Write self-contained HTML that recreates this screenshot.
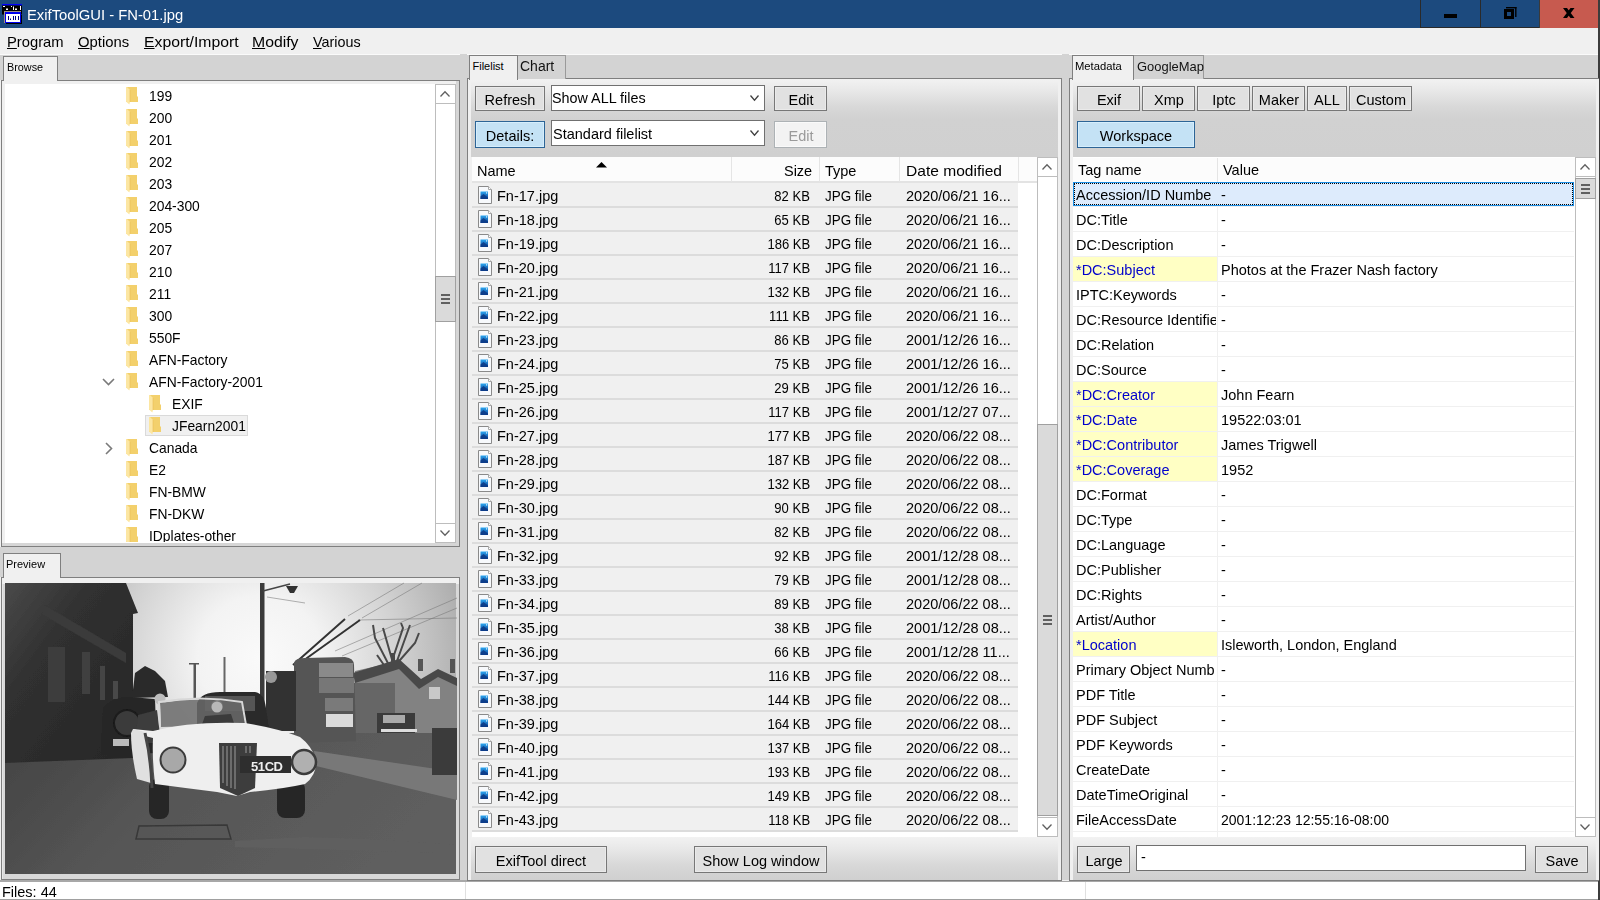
<!DOCTYPE html><html><head><meta charset="utf-8"><style>
*{box-sizing:border-box}
body{margin:0;width:1600px;height:900px;overflow:hidden;position:relative;background:#F0F0F0;font-family:"Liberation Sans",sans-serif;}
.t{position:absolute;white-space:nowrap}
.b{position:absolute}
svg{position:absolute;overflow:visible}
</style></head><body>
<div class="b" style="left:0px;top:0px;width:1598px;height:28px;background:#1C4A7E"></div>
<div class="b" style="left:1598px;top:0px;width:2px;height:900px;background:#3C3C3C"></div>
<svg style="left:0;top:0" width="28" height="28">
<rect x="2" y="4" width="20" height="1.5" fill="#0000FF"/>
<rect x="2" y="5.5" width="20" height="9" fill="#000"/>
<rect x="3" y="6" width="2" height="1" fill="#fff"/><rect x="6" y="8.5" width="2" height="1.5" fill="#fff"/>
<rect x="11" y="6" width="1" height="1" fill="#fff"/><rect x="13" y="6.5" width="1" height="3.5" fill="#fff"/>
<rect x="15" y="8.5" width="2" height="1.5" fill="#fff"/><rect x="20" y="6" width="1" height="4" fill="#fff"/>
<rect x="4" y="11" width="17" height="1" fill="#a09080"/>
<rect x="4" y="11" width="1" height="12" fill="#a09080"/>
<rect x="6" y="23" width="16" height="1" fill="#000"/><rect x="21" y="15" width="1" height="9" fill="#000"/>
<rect x="5" y="12" width="16" height="11" fill="#0000F0"/>
<rect x="6" y="14" width="14" height="8" fill="#fff"/>
<rect x="8" y="16" width="1" height="4" fill="#000080"/><rect x="10" y="18.5" width="1" height="1.5" fill="#000080"/>
<rect x="13" y="16" width="1" height="4" fill="#000080"/><rect x="15" y="16" width="1" height="4" fill="#000080"/><rect x="18" y="16" width="1" height="4" fill="#000080"/>
</svg>
<div class="t" style="left:27px;top:7.30px;font-size:15px;line-height:15px;color:#fff;transform:scaleX(0.986034);transform-origin:0 0;">ExifToolGUI - FN-01.jpg</div>
<div class="b" style="left:1420px;top:0px;width:119px;height:28px;border-left:1px solid #2A2A2A;border-bottom:1px solid #2A2A2A"></div>
<div class="b" style="left:1480px;top:0px;width:1px;height:27px;background:#2A2A2A"></div>
<div class="b" style="left:1540px;top:0px;width:58px;height:28px;background:#C75A4F"></div>
<div class="b" style="left:1539px;top:0px;width:1px;height:28px;background:#3A3A3A"></div>
<div class="b" style="left:1444px;top:14px;width:13px;height:4px;background:#000"></div>
<svg style="left:1500px;top:5px" width="20" height="18">
<rect x="6" y="2" width="10.5" height="1.4" fill="#000"/><rect x="15.1" y="2" width="1.4" height="10" fill="#000"/>
<rect x="4" y="4" width="10" height="10" fill="#000"/><rect x="7" y="7" width="4" height="4" fill="#1C4A7E"/>
</svg>
<svg style="left:1560px;top:6px" width="18" height="15">
<path d="M3 2 H7 L14.5 12 H10.5 Z M10.5 2 H14.5 L7 12 H3 Z" fill="#000"/>
</svg>
<div class="b" style="left:0px;top:28px;width:1598px;height:26px;background:#F0F0F0"></div>
<div class="t" style="left:7px;top:34.30px;font-size:15px;line-height:15px;color:#000;transform:scaleX(0.9841006);transform-origin:0 0;"><u>P</u>rogram</div>
<div class="t" style="left:78.4px;top:34.30px;font-size:15px;line-height:15px;color:#000;transform:scaleX(0.9889340999999999);transform-origin:0 0;"><u>O</u>ptions</div>
<div class="t" style="left:143.7px;top:34.30px;font-size:15px;line-height:15px;color:#000;transform:scaleX(1.0498362);transform-origin:0 0;"><u>E</u>xport/Import</div>
<div class="t" style="left:252.3px;top:34.30px;font-size:15px;line-height:15px;color:#000;transform:scaleX(1.0527363);transform-origin:0 0;"><u>M</u>odify</div>
<div class="t" style="left:313px;top:34.30px;font-size:15px;line-height:15px;color:#000;transform:scaleX(0.957033);transform-origin:0 0;"><u>V</u>arious</div>
<div class="b" style="left:0px;top:54px;width:460px;height:26px;background:#D3D3D3"></div>
<div class="b" style="left:0px;top:54px;width:460px;height:1px;background:#FAFAFA"></div>
<div class="b" style="left:1px;top:80px;width:459px;height:467px;background:#F0F0F0;border:1px solid #7F7F7F"></div>
<div class="b" style="left:456px;top:81px;width:3px;height:465px;background:#D6D6D6"></div>
<div class="b" style="left:2px;top:543px;width:457px;height:3px;background:#D6D6D6"></div>
<div class="b" style="left:5px;top:84px;width:451px;height:459px;background:#fff"></div>
<div class="b" style="left:3px;top:56px;width:55px;height:25px;background:#F0F0F0;border:1px solid #7F7F7F;border-bottom:none"></div>
<div class="t" style="left:6.5px;top:61.99px;font-size:11px;line-height:11px;color:#000;transform:scaleX(0.985);transform-origin:0 0;">Browse</div>
<div class="b" style="left:435px;top:84px;width:21px;height:459px;background:#fff;border-left:1px solid #BDBDBD;border-right:1px solid #BDBDBD"></div>
<div class="b" style="left:435px;top:84px;width:21px;height:20px;background:#fff;border:1px solid #BDBDBD"></div>
<svg style="left:440px;top:91px" width="10" height="6"><path d="M0.5 5.5 L5.0 0.8 L9.5 5.5" fill="none" stroke="#606060" stroke-width="1.3"/></svg>
<div class="b" style="left:435px;top:523px;width:21px;height:20px;background:#fff;border:1px solid #BDBDBD"></div>
<svg style="left:440px;top:530px" width="10" height="6"><path d="M0.5 0.5 L5.0 5.2 L9.5 0.5" fill="none" stroke="#606060" stroke-width="1.3"/></svg>
<div class="b" style="left:435px;top:276px;width:21px;height:46px;background:#DADADA;border:1px solid #A0A0A0"></div>
<div class="b" style="left:441px;top:294.0px;width:9px;height:2.0px;background:#606060"></div>
<div class="b" style="left:441px;top:298.0px;width:9px;height:2.0px;background:#606060"></div>
<div class="b" style="left:441px;top:302.0px;width:9px;height:2.0px;background:#606060"></div>
<div class="b" style="left:5px;top:85px;width:430px;height:457px;overflow:hidden">
<svg style="left:121px;top:2px" width="13" height="18"><path d="M0 0 H11 V9.5 H12 V15 H0 Z" fill="#F3D06C"/><path d="M0 0 H1 L4 3 V15 L3.3 17.5 L0 14.5 Z" fill="#FCE6A2"/><path d="M4 3 V15" stroke="#E9BE55" stroke-width="0.6"/></svg>
<div class="t" style="left:143.5px;top:2.90px;font-size:15px;line-height:15px;color:#000;transform:scaleX(0.9231984999999999);transform-origin:0 0;">199</div>
<svg style="left:121px;top:24px" width="13" height="18"><path d="M0 0 H11 V9.5 H12 V15 H0 Z" fill="#F3D06C"/><path d="M0 0 H1 L4 3 V15 L3.3 17.5 L0 14.5 Z" fill="#FCE6A2"/><path d="M4 3 V15" stroke="#E9BE55" stroke-width="0.6"/></svg>
<div class="t" style="left:143.5px;top:24.90px;font-size:15px;line-height:15px;color:#000;transform:scaleX(0.9231984999999999);transform-origin:0 0;">200</div>
<svg style="left:121px;top:46px" width="13" height="18"><path d="M0 0 H11 V9.5 H12 V15 H0 Z" fill="#F3D06C"/><path d="M0 0 H1 L4 3 V15 L3.3 17.5 L0 14.5 Z" fill="#FCE6A2"/><path d="M4 3 V15" stroke="#E9BE55" stroke-width="0.6"/></svg>
<div class="t" style="left:143.5px;top:46.90px;font-size:15px;line-height:15px;color:#000;transform:scaleX(0.9231984999999999);transform-origin:0 0;">201</div>
<svg style="left:121px;top:68px" width="13" height="18"><path d="M0 0 H11 V9.5 H12 V15 H0 Z" fill="#F3D06C"/><path d="M0 0 H1 L4 3 V15 L3.3 17.5 L0 14.5 Z" fill="#FCE6A2"/><path d="M4 3 V15" stroke="#E9BE55" stroke-width="0.6"/></svg>
<div class="t" style="left:143.5px;top:68.90px;font-size:15px;line-height:15px;color:#000;transform:scaleX(0.9231984999999999);transform-origin:0 0;">202</div>
<svg style="left:121px;top:90px" width="13" height="18"><path d="M0 0 H11 V9.5 H12 V15 H0 Z" fill="#F3D06C"/><path d="M0 0 H1 L4 3 V15 L3.3 17.5 L0 14.5 Z" fill="#FCE6A2"/><path d="M4 3 V15" stroke="#E9BE55" stroke-width="0.6"/></svg>
<div class="t" style="left:143.5px;top:90.90px;font-size:15px;line-height:15px;color:#000;transform:scaleX(0.9231984999999999);transform-origin:0 0;">203</div>
<svg style="left:121px;top:112px" width="13" height="18"><path d="M0 0 H11 V9.5 H12 V15 H0 Z" fill="#F3D06C"/><path d="M0 0 H1 L4 3 V15 L3.3 17.5 L0 14.5 Z" fill="#FCE6A2"/><path d="M4 3 V15" stroke="#E9BE55" stroke-width="0.6"/></svg>
<div class="t" style="left:143.5px;top:112.90px;font-size:15px;line-height:15px;color:#000;transform:scaleX(0.9231984999999999);transform-origin:0 0;">204-300</div>
<svg style="left:121px;top:134px" width="13" height="18"><path d="M0 0 H11 V9.5 H12 V15 H0 Z" fill="#F3D06C"/><path d="M0 0 H1 L4 3 V15 L3.3 17.5 L0 14.5 Z" fill="#FCE6A2"/><path d="M4 3 V15" stroke="#E9BE55" stroke-width="0.6"/></svg>
<div class="t" style="left:143.5px;top:134.90px;font-size:15px;line-height:15px;color:#000;transform:scaleX(0.9231984999999999);transform-origin:0 0;">205</div>
<svg style="left:121px;top:156px" width="13" height="18"><path d="M0 0 H11 V9.5 H12 V15 H0 Z" fill="#F3D06C"/><path d="M0 0 H1 L4 3 V15 L3.3 17.5 L0 14.5 Z" fill="#FCE6A2"/><path d="M4 3 V15" stroke="#E9BE55" stroke-width="0.6"/></svg>
<div class="t" style="left:143.5px;top:156.90px;font-size:15px;line-height:15px;color:#000;transform:scaleX(0.9231984999999999);transform-origin:0 0;">207</div>
<svg style="left:121px;top:178px" width="13" height="18"><path d="M0 0 H11 V9.5 H12 V15 H0 Z" fill="#F3D06C"/><path d="M0 0 H1 L4 3 V15 L3.3 17.5 L0 14.5 Z" fill="#FCE6A2"/><path d="M4 3 V15" stroke="#E9BE55" stroke-width="0.6"/></svg>
<div class="t" style="left:143.5px;top:178.90px;font-size:15px;line-height:15px;color:#000;transform:scaleX(0.9231984999999999);transform-origin:0 0;">210</div>
<svg style="left:121px;top:200px" width="13" height="18"><path d="M0 0 H11 V9.5 H12 V15 H0 Z" fill="#F3D06C"/><path d="M0 0 H1 L4 3 V15 L3.3 17.5 L0 14.5 Z" fill="#FCE6A2"/><path d="M4 3 V15" stroke="#E9BE55" stroke-width="0.6"/></svg>
<div class="t" style="left:143.5px;top:200.90px;font-size:15px;line-height:15px;color:#000;transform:scaleX(0.9231984999999999);transform-origin:0 0;">211</div>
<svg style="left:121px;top:222px" width="13" height="18"><path d="M0 0 H11 V9.5 H12 V15 H0 Z" fill="#F3D06C"/><path d="M0 0 H1 L4 3 V15 L3.3 17.5 L0 14.5 Z" fill="#FCE6A2"/><path d="M4 3 V15" stroke="#E9BE55" stroke-width="0.6"/></svg>
<div class="t" style="left:143.5px;top:222.90px;font-size:15px;line-height:15px;color:#000;transform:scaleX(0.9231984999999999);transform-origin:0 0;">300</div>
<svg style="left:121px;top:244px" width="13" height="18"><path d="M0 0 H11 V9.5 H12 V15 H0 Z" fill="#F3D06C"/><path d="M0 0 H1 L4 3 V15 L3.3 17.5 L0 14.5 Z" fill="#FCE6A2"/><path d="M4 3 V15" stroke="#E9BE55" stroke-width="0.6"/></svg>
<div class="t" style="left:143.5px;top:244.90px;font-size:15px;line-height:15px;color:#000;transform:scaleX(0.9231984999999999);transform-origin:0 0;">550F</div>
<svg style="left:121px;top:266px" width="13" height="18"><path d="M0 0 H11 V9.5 H12 V15 H0 Z" fill="#F3D06C"/><path d="M0 0 H1 L4 3 V15 L3.3 17.5 L0 14.5 Z" fill="#FCE6A2"/><path d="M4 3 V15" stroke="#E9BE55" stroke-width="0.6"/></svg>
<div class="t" style="left:143.5px;top:266.90px;font-size:15px;line-height:15px;color:#000;transform:scaleX(0.9231984999999999);transform-origin:0 0;">AFN-Factory</div>
<svg style="left:121px;top:288px" width="13" height="18"><path d="M0 0 H11 V9.5 H12 V15 H0 Z" fill="#F3D06C"/><path d="M0 0 H1 L4 3 V15 L3.3 17.5 L0 14.5 Z" fill="#FCE6A2"/><path d="M4 3 V15" stroke="#E9BE55" stroke-width="0.6"/></svg>
<div class="t" style="left:143.5px;top:288.90px;font-size:15px;line-height:15px;color:#000;transform:scaleX(0.9231984999999999);transform-origin:0 0;">AFN-Factory-2001</div>
<svg style="left:144px;top:310px" width="13" height="18"><path d="M0 0 H11 V9.5 H12 V15 H0 Z" fill="#F3D06C"/><path d="M0 0 H1 L4 3 V15 L3.3 17.5 L0 14.5 Z" fill="#FCE6A2"/><path d="M4 3 V15" stroke="#E9BE55" stroke-width="0.6"/></svg>
<div class="t" style="left:166.5px;top:310.90px;font-size:15px;line-height:15px;color:#000;transform:scaleX(0.9231984999999999);transform-origin:0 0;">EXIF</div>
<div class="b" style="left:139.5px;top:329.5px;width:103.0px;height:21.5px;background:#F0F0F0;border:1px solid #DADADA"></div>
<svg style="left:144px;top:332px" width="13" height="18"><path d="M0 0 H11 V9.5 H12 V15 H0 Z" fill="#F3D06C"/><path d="M0 0 H1 L4 3 V15 L3.3 17.5 L0 14.5 Z" fill="#FCE6A2"/><path d="M4 3 V15" stroke="#E9BE55" stroke-width="0.6"/></svg>
<div class="t" style="left:166.5px;top:332.90px;font-size:15px;line-height:15px;color:#000;transform:scaleX(0.9231984999999999);transform-origin:0 0;">JFearn2001</div>
<svg style="left:121px;top:354px" width="13" height="18"><path d="M0 0 H11 V9.5 H12 V15 H0 Z" fill="#F3D06C"/><path d="M0 0 H1 L4 3 V15 L3.3 17.5 L0 14.5 Z" fill="#FCE6A2"/><path d="M4 3 V15" stroke="#E9BE55" stroke-width="0.6"/></svg>
<div class="t" style="left:143.5px;top:354.90px;font-size:15px;line-height:15px;color:#000;transform:scaleX(0.9231984999999999);transform-origin:0 0;">Canada</div>
<svg style="left:121px;top:376px" width="13" height="18"><path d="M0 0 H11 V9.5 H12 V15 H0 Z" fill="#F3D06C"/><path d="M0 0 H1 L4 3 V15 L3.3 17.5 L0 14.5 Z" fill="#FCE6A2"/><path d="M4 3 V15" stroke="#E9BE55" stroke-width="0.6"/></svg>
<div class="t" style="left:143.5px;top:376.90px;font-size:15px;line-height:15px;color:#000;transform:scaleX(0.9231984999999999);transform-origin:0 0;">E2</div>
<svg style="left:121px;top:398px" width="13" height="18"><path d="M0 0 H11 V9.5 H12 V15 H0 Z" fill="#F3D06C"/><path d="M0 0 H1 L4 3 V15 L3.3 17.5 L0 14.5 Z" fill="#FCE6A2"/><path d="M4 3 V15" stroke="#E9BE55" stroke-width="0.6"/></svg>
<div class="t" style="left:143.5px;top:398.90px;font-size:15px;line-height:15px;color:#000;transform:scaleX(0.9231984999999999);transform-origin:0 0;">FN-BMW</div>
<svg style="left:121px;top:420px" width="13" height="18"><path d="M0 0 H11 V9.5 H12 V15 H0 Z" fill="#F3D06C"/><path d="M0 0 H1 L4 3 V15 L3.3 17.5 L0 14.5 Z" fill="#FCE6A2"/><path d="M4 3 V15" stroke="#E9BE55" stroke-width="0.6"/></svg>
<div class="t" style="left:143.5px;top:420.90px;font-size:15px;line-height:15px;color:#000;transform:scaleX(0.9231984999999999);transform-origin:0 0;">FN-DKW</div>
<svg style="left:121px;top:442px" width="13" height="18"><path d="M0 0 H11 V9.5 H12 V15 H0 Z" fill="#F3D06C"/><path d="M0 0 H1 L4 3 V15 L3.3 17.5 L0 14.5 Z" fill="#FCE6A2"/><path d="M4 3 V15" stroke="#E9BE55" stroke-width="0.6"/></svg>
<div class="t" style="left:143.5px;top:442.90px;font-size:15px;line-height:15px;color:#000;transform:scaleX(0.9231984999999999);transform-origin:0 0;">IDplates-other</div>
</div>
<svg style="left:102px;top:378px" width="13" height="8"><path d="M1 1 L6.5 6.5 L12 1" fill="none" stroke="#7A7A7A" stroke-width="1.6"/></svg>
<svg style="left:105px;top:442px" width="8" height="13"><path d="M1 1 L6.5 6.5 L1 12" fill="none" stroke="#7A7A7A" stroke-width="1.6"/></svg>
<div class="b" style="left:0px;top:547px;width:460px;height:30px;background:#D3D3D3"></div>
<div class="b" style="left:1px;top:577px;width:459px;height:303px;background:#F0F0F0;border:1px solid #7F7F7F"></div>
<div class="b" style="left:2px;top:583px;width:457px;height:296px;background:#D8D8D8;border-top:1px solid #F0F0F0;box-shadow:inset 1px 0 0 #E6E6E6"></div>
<div class="b" style="left:3px;top:553px;width:58px;height:25px;background:#F0F0F0;border:1px solid #7F7F7F;border-bottom:none"></div>
<div class="t" style="left:6.4px;top:558.69px;font-size:11px;line-height:11px;color:#000;transform:scaleX(0.999);transform-origin:0 0;">Preview</div>
<svg style="left:5px;top:583px" width="451" height="291" viewBox="0 0 451 291">
<defs>
<radialGradient id="sky" gradientUnits="userSpaceOnUse" cx="255" cy="75" r="250"><stop offset="0" stop-color="#FAFAFA"/><stop offset="0.25" stop-color="#F3F3F3"/><stop offset="0.55" stop-color="#D2D2D2"/><stop offset="0.85" stop-color="#ABABAB"/><stop offset="1" stop-color="#9A9A9A"/></radialGradient>
<linearGradient id="road" x1="0" y1="0" x2="1" y2="0.3"><stop offset="0" stop-color="#434343"/><stop offset="0.45" stop-color="#565656"/><stop offset="1" stop-color="#5E5E5E"/></linearGradient>
<linearGradient id="bldg" x1="0" y1="0" x2="1" y2="1"><stop offset="0" stop-color="#4A4A4A"/><stop offset="0.35" stop-color="#303030"/><stop offset="1" stop-color="#262626"/></linearGradient>
<filter id="bl" x="-5%" y="-5%" width="110%" height="110%"><feGaussianBlur stdDeviation="0.7"/></filter>
</defs>
<g filter="url(#bl)">
<rect x="0" y="0" width="451" height="291" fill="url(#sky)"/>
<!-- wires -->
<g stroke="#777" stroke-width="0.8" fill="none" opacity="0.7">
<path d="M343 33 L399 0 M357 35 L417 0 M353 37 L452 35 M337 73 L452 25 M330 68 L452 15 M262 14 L300 20"/>
</g>
<!-- trolley poles -->
<path d="M288 82 L340 36 M295 80 L355 37" stroke="#333" stroke-width="2" fill="none"/>
<!-- road -->
<path d="M0 150 L130 150 L300 150 L451 150 L451 291 L0 291 Z" fill="url(#road)"/>
<path d="M309 168 L452 189 L452 217 L311 183 Z" fill="#787878"/>

<path d="M230 258 L300 254 L360 256 L451 262 L451 270 L300 266 L230 264 Z" fill="#5F5F5F"/>
<!-- tree -->
<g stroke="#4a4a4a" fill="none">
<path d="M388 128 L388 70" stroke-width="4"/>
<path d="M388 90 L370 55 L368 42 M388 80 L378 45 M388 75 L398 45 L396 40 M388 85 L410 60 L414 50 M388 95 L372 72 M392 78 L405 42" stroke-width="2"/>
</g>
<!-- houses -->
<path d="M350 88 L394 78 L414 98 L433 88 L452 100 L452 150 L350 150 Z" fill="#828282"/>
<path d="M348 90 L394 76 L416 96 L433 86 L452 95 L452 103 L433 94 L414 106 L394 86 L350 100 Z" fill="#4A4A4A"/>
<rect x="413" y="76" width="5" height="12" fill="#555"/><rect x="445" y="76" width="5" height="14" fill="#555"/>
<rect x="345" y="100" width="45" height="50" fill="#666"/>
<rect x="424" y="104" width="11" height="12" fill="#C8C8C8"/>
<rect x="427" y="145" width="25" height="47" fill="#3A3A3A"/>
<!-- van right -->
<rect x="372" y="130" width="38" height="20" fill="#3a3a3a"/>
<rect x="378" y="132" width="22" height="8" fill="#AAA"/>
<rect x="376" y="146" width="36" height="3" fill="#DDD"/>
<!-- lamp post -->
<rect x="255" y="0" width="4.5" height="136" fill="#3A3A3A"/>
<path d="M258 8 L285 1" stroke="#444" stroke-width="1.5"/>
<path d="M281 3 L293 3 L289 10 L285 10 Z" fill="#333"/>
<!-- utility poles -->
<rect x="188.5" y="80" width="2.5" height="36" fill="#555"/><rect x="184" y="80" width="10" height="1.5" fill="#555"/>
<rect x="218.5" y="74" width="2" height="38" fill="#666"/>
<!-- bus -->
<path d="M289 80 Q290 75 300 75 L340 74 Q349 75 349 82 L351 158 L289 160 Z" fill="#555"/>
<rect x="314" y="80" width="34" height="14" fill="#8A8A8A"/>
<rect x="314" y="95" width="35" height="15" fill="#777"/>
<rect x="320" y="115" width="28" height="13" fill="#7A7A7A"/>
<rect x="321" y="131" width="27" height="13" fill="#DADADA"/>
<rect x="261" y="88" width="30" height="60" fill="#333"/>
<circle cx="266" cy="94" r="6" fill="#999"/>
<!-- building -->
<path d="M0 0 L121 0 L133 30 L128 31 L128 175 L0 180 Z" fill="url(#bldg)"/>
<path d="M38 21 L121 70 L121 80 L38 32 Z" fill="#3A3A3A"/>
<rect x="43" y="64" width="17" height="55" fill="#3E3E3E"/>
<rect x="77" y="69" width="8" height="42" fill="#404040"/>
<rect x="95" y="83" width="5" height="34" fill="#444"/>
<rect x="108" y="98" width="5" height="18" fill="#484848"/>
<!-- bushy tree -->
<path d="M127 115 L130 90 L140 83 L150 88 L160 98 L163 114 Z" fill="#2C2C2C"/>
<!-- dark car left -->
<path d="M98 125 Q105 115 125 114 L150 116 L152 170 L96 172 Z" fill="#262626"/>
<circle cx="122" cy="140" r="13" fill="#3A3A3A" stroke="#1a1a1a" stroke-width="2"/>
<rect x="108" y="156" width="16" height="7" fill="#BBB"/>
<!-- dark car behind -->
<path d="M192 120 Q196 109 215 109 L250 109 Q259 110 261 125 L265 152 L192 152 Z" fill="#2A2A2A"/>
<rect x="200" y="113" width="50" height="15" fill="#555"/>
<!-- people -->
<path d="M133 132 L152 127 L156 160 L130 160 Z" fill="#3C3C3C"/>
<circle cx="155" cy="116" r="5.5" fill="#BDBDBD"/>
<circle cx="212" cy="123" r="6" fill="#ABABAB"/>
<path d="M198 135 L228 133 L230 145 L196 146 Z" fill="#333"/>
<!-- windscreen -->
<path d="M156 144 L155 120 Q195 113 236 120 L240 142 Z" fill="#6A6A6A" opacity="0.85"/>
<circle cx="212" cy="124" r="5.5" fill="#B8B8B8"/><path d="M200 133 L226 131 L230 143 L196 144 Z" fill="#3A3A3A"/>
<path d="M155 144 L154 119 Q195 112 237 119 L241 142" fill="none" stroke="#D8D8D8" stroke-width="2"/>
<!-- wheels -->
<rect x="144" y="196" width="20" height="40" rx="8" fill="#262626"/>
<rect x="272" y="198" width="28" height="37" rx="8" fill="#262626"/>
<!-- white car -->
<path d="M128 146 L148 148 Q185 138 240 140 Q275 146 295 154 Q307 163 311 177 Q312 192 300 201 Q278 206 245 209 L232 213 L212 209 Q180 205 150 201 Q147 175 148 155 L128 150 Z" fill="#EFEFEF"/>
<path d="M128 146 L140 149 Q145 175 146 200 L132 196 Q126 170 126 150 Z" fill="#E0E0E0"/>
<path d="M140 150 Q146 175 147 205" stroke="#444" stroke-width="3" fill="none"/>
<path d="M214 160 L252 160 L250 205 L233 213 L215 205 Z" fill="#3E3E3E"/><path d="M218 163 V200 M222 163 V203 M226 163 V205 M230 163 V206 M241 163 V170 M245 163 V170" stroke="#9A9A9A" stroke-width="1"/>
<rect x="235" y="173" width="51" height="17" fill="#2E2E2E"/>
<text x="246" y="187.5" font-family="Liberation Sans" font-weight="bold" font-size="13" fill="#EEE" textLength="32">51CD</text>
<circle cx="168" cy="177" r="12.5" fill="#A8A8A8" stroke="#3A3A3A" stroke-width="2"/>
<circle cx="299" cy="179" r="12" fill="#B0B0B0" stroke="#3A3A3A" stroke-width="2.5"/>
<!-- drain -->
<path d="M134 243 L222 242 L226 256 L131 256 Z" fill="none" stroke="#383838" stroke-width="1.5"/>
</g>
</svg>
<div class="b" style="left:460px;top:54px;width:7px;height:826px;background:#D3D3D3"></div>
<div class="b" style="left:1062px;top:54px;width:7px;height:826px;background:#D3D3D3"></div>
<div class="b" style="left:467px;top:54px;width:595px;height:25px;background:#D3D3D3"></div>
<div class="b" style="left:467px;top:54px;width:595px;height:1px;background:#FAFAFA"></div>
<div class="b" style="left:467px;top:78px;width:595px;height:803px;background:#F0F0F0;border:1px solid #7F7F7F"></div>
<div class="b" style="left:471px;top:79px;width:587px;height:78px;background:linear-gradient(to bottom,#F2F2F2 0px,#E8E8E8 12px,#D8D8D8 28px,#D1D1D1 40px,#D0D0D0 100%)"></div>
<div class="b" style="left:471px;top:837px;width:587px;height:43px;background:linear-gradient(to bottom,#F2F2F2 0px,#E8E8E8 12px,#D8D8D8 28px,#D1D1D1 40px,#D0D0D0 100%)"></div>
<div class="b" style="left:517px;top:55px;width:49px;height:24px;background:#D3D3D3;border:1px solid #9A9A9A;border-bottom:none"></div>
<div class="b" style="left:469px;top:55px;width:49px;height:24.5px;background:#F0F0F0;border:1px solid #7F7F7F;border-bottom:none"></div>
<div class="t" style="left:472.5px;top:60.99px;font-size:11px;line-height:11px;color:#000;letter-spacing:-0.4pxtransform:scaleX(0.999);transform-origin:0 0;">Filelist</div>
<div class="t" style="left:520.2px;top:58.75px;font-size:14px;line-height:14px;color:#111;transform:scaleX(0.999);transform-origin:0 0;">Chart</div>
<div class="b" style="left:475px;top:86px;width:70px;height:25px;background:#E1E1E1;border:1px solid #777;box-shadow:inset 0 0 0 1px #EAEAEA"></div>
<div class="t" style="left:310.0px;width:400px;text-align:center;top:92.30px;font-size:15px;line-height:15px;color:#000;transform:scaleX(0.9667);transform-origin:50% 0;">Refresh</div>
<div class="b" style="left:551px;top:85px;width:214px;height:26px;background:#fff;border:1px solid #707070"></div>
<div class="t" style="left:552px;top:90.30px;font-size:15px;line-height:15px;color:#000;transform:scaleX(0.957033);transform-origin:0 0;">Show ALL files</div>
<svg style="left:750px;top:95px" width="9" height="6"><path d="M0.5 0.5 L4.5 5.2 L8.5 0.5" fill="none" stroke="#404040" stroke-width="1.3"/></svg>
<div class="b" style="left:774px;top:86px;width:53px;height:25px;background:#E1E1E1;border:1px solid #777;box-shadow:inset 0 0 0 1px #EAEAEA"></div>
<div class="t" style="left:600.5px;width:400px;text-align:center;top:92.30px;font-size:15px;line-height:15px;color:#000;transform:scaleX(0.9667);transform-origin:50% 0;">Edit</div>
<div class="b" style="left:475px;top:121px;width:70px;height:27px;background:#C4E2F5;border:1px solid #2C6496;box-shadow:inset 0 0 0 1px #D6EEFC"></div>
<div class="t" style="left:310.0px;width:400px;text-align:center;top:127.90px;font-size:15px;line-height:15px;color:#000;transform:scaleX(0.9667);transform-origin:50% 0;">Details:</div>
<div class="b" style="left:551px;top:120px;width:214px;height:26px;background:#fff;border:1px solid #707070"></div>
<div class="t" style="left:553px;top:126.30px;font-size:15px;line-height:15px;color:#000;transform:scaleX(0.9667);transform-origin:0 0;">Standard filelist</div>
<svg style="left:750px;top:130px" width="9" height="6"><path d="M0.5 0.5 L4.5 5.2 L8.5 0.5" fill="none" stroke="#404040" stroke-width="1.3"/></svg>
<div class="b" style="left:774px;top:121px;width:53px;height:27px;background:#F3F3F3;border:1px solid #ADB2B5;box-shadow:inset 0 0 0 1px #FAFAFA"></div>
<div class="t" style="left:600.5px;width:400px;text-align:center;top:127.90px;font-size:15px;line-height:15px;color:#9A9A9A;transform:scaleX(0.9667);transform-origin:50% 0;">Edit</div>
<div class="b" style="left:472px;top:157px;width:586px;height:680px;background:#fff"></div>
<div class="b" style="left:472px;top:157px;width:565px;height:26px;background:#FCFCFC;border-bottom:2px solid #E3E3E3"></div>
<div class="b" style="left:730.5px;top:157px;width:1.0px;height:25px;background:#E5E5E5"></div>
<div class="b" style="left:818.5px;top:157px;width:1.0px;height:25px;background:#E5E5E5"></div>
<div class="b" style="left:898.5px;top:157px;width:1.0px;height:25px;background:#E5E5E5"></div>
<div class="b" style="left:1018px;top:157px;width:1px;height:25px;background:#E5E5E5"></div>
<div class="t" style="left:477px;top:163.30px;font-size:15px;line-height:15px;color:#000;transform:scaleX(0.9667);transform-origin:0 0;">Name</div>
<svg style="left:596px;top:162px" width="11" height="6"><path d="M0 5.5 L5.5 0 L11 5.5 Z" fill="#000"/></svg>
<div class="t" style="right:787.5px;top:163.30px;font-size:15px;line-height:15px;color:#000;transform:scaleX(0.9667);transform-origin:100% 0;">Size</div>
<div class="t" style="left:825px;top:163.30px;font-size:15px;line-height:15px;color:#000;transform:scaleX(0.9667);transform-origin:0 0;">Type</div>
<div class="t" style="left:905.6px;top:163.30px;font-size:15px;line-height:15px;color:#000;transform:scaleX(1.0372691);transform-origin:0 0;">Date modified</div>
<svg style="left:0;top:0" width="0" height="0"><defs><linearGradient id="ig" x1="0" y1="0" x2="0" y2="1"><stop offset="0" stop-color="#2BA8F2"/><stop offset="1" stop-color="#0D3F94"/></linearGradient></defs></svg>
<div class="b" style="left:472px;top:183px;width:546px;height:23px;background:#F0F0F0"></div>
<div class="b" style="left:472px;top:206px;width:546px;height:2px;background:#DCDCDC"></div>
<svg style="left:478px;top:186px" width="15" height="19"><path d="M0.5 0.5 H10.5 L13.5 3.5 V17.5 H0.5 Z" fill="#F7F9FC" stroke="#8A8A8A"/><path d="M10.5 0.5 V3.5 H13.5" fill="#fff" stroke="#A8A8A8"/><rect x="2.5" y="5.5" width="7.5" height="7.5" fill="url(#ig)"/><path d="M2.5 13 L2.5 10.5 L5.5 8 L10 11.5 V13 Z" fill="#0B3A86" opacity="0.85"/><rect x="8" y="6.3" width="1.2" height="1.2" fill="#E8F4FF"/></svg>
<div class="t" style="left:497px;top:188.30px;font-size:15px;line-height:15px;color:#000;transform:scaleX(0.9667);transform-origin:0 0;">Fn-17.jpg</div>
<div class="t" style="right:790px;top:188.30px;font-size:15px;line-height:15px;color:#000;transform:scaleX(0.87003);transform-origin:100% 0;">82 KB</div>
<div class="t" style="left:825px;top:188.30px;font-size:15px;line-height:15px;color:#000;transform:scaleX(0.8951642000000001);transform-origin:0 0;">JPG file</div>
<div class="t" style="left:905.6px;top:188.30px;font-size:15px;line-height:15px;color:#000;transform:scaleX(0.9667);transform-origin:0 0;">2020/06/21 16...</div>
<div class="b" style="left:472px;top:208px;width:546px;height:22px;background:#F0F0F0"></div>
<div class="b" style="left:472px;top:230px;width:546px;height:2px;background:#DCDCDC"></div>
<svg style="left:478px;top:210px" width="15" height="19"><path d="M0.5 0.5 H10.5 L13.5 3.5 V17.5 H0.5 Z" fill="#F7F9FC" stroke="#8A8A8A"/><path d="M10.5 0.5 V3.5 H13.5" fill="#fff" stroke="#A8A8A8"/><rect x="2.5" y="5.5" width="7.5" height="7.5" fill="url(#ig)"/><path d="M2.5 13 L2.5 10.5 L5.5 8 L10 11.5 V13 Z" fill="#0B3A86" opacity="0.85"/><rect x="8" y="6.3" width="1.2" height="1.2" fill="#E8F4FF"/></svg>
<div class="t" style="left:497px;top:212.30px;font-size:15px;line-height:15px;color:#000;transform:scaleX(0.9667);transform-origin:0 0;">Fn-18.jpg</div>
<div class="t" style="right:790px;top:212.30px;font-size:15px;line-height:15px;color:#000;transform:scaleX(0.87003);transform-origin:100% 0;">65 KB</div>
<div class="t" style="left:825px;top:212.30px;font-size:15px;line-height:15px;color:#000;transform:scaleX(0.8951642000000001);transform-origin:0 0;">JPG file</div>
<div class="t" style="left:905.6px;top:212.30px;font-size:15px;line-height:15px;color:#000;transform:scaleX(0.9667);transform-origin:0 0;">2020/06/21 16...</div>
<div class="b" style="left:472px;top:232px;width:546px;height:22px;background:#F0F0F0"></div>
<div class="b" style="left:472px;top:254px;width:546px;height:2px;background:#DCDCDC"></div>
<svg style="left:478px;top:234px" width="15" height="19"><path d="M0.5 0.5 H10.5 L13.5 3.5 V17.5 H0.5 Z" fill="#F7F9FC" stroke="#8A8A8A"/><path d="M10.5 0.5 V3.5 H13.5" fill="#fff" stroke="#A8A8A8"/><rect x="2.5" y="5.5" width="7.5" height="7.5" fill="url(#ig)"/><path d="M2.5 13 L2.5 10.5 L5.5 8 L10 11.5 V13 Z" fill="#0B3A86" opacity="0.85"/><rect x="8" y="6.3" width="1.2" height="1.2" fill="#E8F4FF"/></svg>
<div class="t" style="left:497px;top:236.30px;font-size:15px;line-height:15px;color:#000;transform:scaleX(0.9667);transform-origin:0 0;">Fn-19.jpg</div>
<div class="t" style="right:790px;top:236.30px;font-size:15px;line-height:15px;color:#000;transform:scaleX(0.87003);transform-origin:100% 0;">186 KB</div>
<div class="t" style="left:825px;top:236.30px;font-size:15px;line-height:15px;color:#000;transform:scaleX(0.8951642000000001);transform-origin:0 0;">JPG file</div>
<div class="t" style="left:905.6px;top:236.30px;font-size:15px;line-height:15px;color:#000;transform:scaleX(0.9667);transform-origin:0 0;">2020/06/21 16...</div>
<div class="b" style="left:472px;top:256px;width:546px;height:22px;background:#F0F0F0"></div>
<div class="b" style="left:472px;top:278px;width:546px;height:2px;background:#DCDCDC"></div>
<svg style="left:478px;top:258px" width="15" height="19"><path d="M0.5 0.5 H10.5 L13.5 3.5 V17.5 H0.5 Z" fill="#F7F9FC" stroke="#8A8A8A"/><path d="M10.5 0.5 V3.5 H13.5" fill="#fff" stroke="#A8A8A8"/><rect x="2.5" y="5.5" width="7.5" height="7.5" fill="url(#ig)"/><path d="M2.5 13 L2.5 10.5 L5.5 8 L10 11.5 V13 Z" fill="#0B3A86" opacity="0.85"/><rect x="8" y="6.3" width="1.2" height="1.2" fill="#E8F4FF"/></svg>
<div class="t" style="left:497px;top:260.30px;font-size:15px;line-height:15px;color:#000;transform:scaleX(0.9667);transform-origin:0 0;">Fn-20.jpg</div>
<div class="t" style="right:790px;top:260.30px;font-size:15px;line-height:15px;color:#000;transform:scaleX(0.87003);transform-origin:100% 0;">117 KB</div>
<div class="t" style="left:825px;top:260.30px;font-size:15px;line-height:15px;color:#000;transform:scaleX(0.8951642000000001);transform-origin:0 0;">JPG file</div>
<div class="t" style="left:905.6px;top:260.30px;font-size:15px;line-height:15px;color:#000;transform:scaleX(0.9667);transform-origin:0 0;">2020/06/21 16...</div>
<div class="b" style="left:472px;top:280px;width:546px;height:22px;background:#F0F0F0"></div>
<div class="b" style="left:472px;top:302px;width:546px;height:2px;background:#DCDCDC"></div>
<svg style="left:478px;top:282px" width="15" height="19"><path d="M0.5 0.5 H10.5 L13.5 3.5 V17.5 H0.5 Z" fill="#F7F9FC" stroke="#8A8A8A"/><path d="M10.5 0.5 V3.5 H13.5" fill="#fff" stroke="#A8A8A8"/><rect x="2.5" y="5.5" width="7.5" height="7.5" fill="url(#ig)"/><path d="M2.5 13 L2.5 10.5 L5.5 8 L10 11.5 V13 Z" fill="#0B3A86" opacity="0.85"/><rect x="8" y="6.3" width="1.2" height="1.2" fill="#E8F4FF"/></svg>
<div class="t" style="left:497px;top:284.30px;font-size:15px;line-height:15px;color:#000;transform:scaleX(0.9667);transform-origin:0 0;">Fn-21.jpg</div>
<div class="t" style="right:790px;top:284.30px;font-size:15px;line-height:15px;color:#000;transform:scaleX(0.87003);transform-origin:100% 0;">132 KB</div>
<div class="t" style="left:825px;top:284.30px;font-size:15px;line-height:15px;color:#000;transform:scaleX(0.8951642000000001);transform-origin:0 0;">JPG file</div>
<div class="t" style="left:905.6px;top:284.30px;font-size:15px;line-height:15px;color:#000;transform:scaleX(0.9667);transform-origin:0 0;">2020/06/21 16...</div>
<div class="b" style="left:472px;top:304px;width:546px;height:22px;background:#F0F0F0"></div>
<div class="b" style="left:472px;top:326px;width:546px;height:2px;background:#DCDCDC"></div>
<svg style="left:478px;top:306px" width="15" height="19"><path d="M0.5 0.5 H10.5 L13.5 3.5 V17.5 H0.5 Z" fill="#F7F9FC" stroke="#8A8A8A"/><path d="M10.5 0.5 V3.5 H13.5" fill="#fff" stroke="#A8A8A8"/><rect x="2.5" y="5.5" width="7.5" height="7.5" fill="url(#ig)"/><path d="M2.5 13 L2.5 10.5 L5.5 8 L10 11.5 V13 Z" fill="#0B3A86" opacity="0.85"/><rect x="8" y="6.3" width="1.2" height="1.2" fill="#E8F4FF"/></svg>
<div class="t" style="left:497px;top:308.30px;font-size:15px;line-height:15px;color:#000;transform:scaleX(0.9667);transform-origin:0 0;">Fn-22.jpg</div>
<div class="t" style="right:790px;top:308.30px;font-size:15px;line-height:15px;color:#000;transform:scaleX(0.87003);transform-origin:100% 0;">111 KB</div>
<div class="t" style="left:825px;top:308.30px;font-size:15px;line-height:15px;color:#000;transform:scaleX(0.8951642000000001);transform-origin:0 0;">JPG file</div>
<div class="t" style="left:905.6px;top:308.30px;font-size:15px;line-height:15px;color:#000;transform:scaleX(0.9667);transform-origin:0 0;">2020/06/21 16...</div>
<div class="b" style="left:472px;top:328px;width:546px;height:22px;background:#F0F0F0"></div>
<div class="b" style="left:472px;top:350px;width:546px;height:2px;background:#DCDCDC"></div>
<svg style="left:478px;top:330px" width="15" height="19"><path d="M0.5 0.5 H10.5 L13.5 3.5 V17.5 H0.5 Z" fill="#F7F9FC" stroke="#8A8A8A"/><path d="M10.5 0.5 V3.5 H13.5" fill="#fff" stroke="#A8A8A8"/><rect x="2.5" y="5.5" width="7.5" height="7.5" fill="url(#ig)"/><path d="M2.5 13 L2.5 10.5 L5.5 8 L10 11.5 V13 Z" fill="#0B3A86" opacity="0.85"/><rect x="8" y="6.3" width="1.2" height="1.2" fill="#E8F4FF"/></svg>
<div class="t" style="left:497px;top:332.30px;font-size:15px;line-height:15px;color:#000;transform:scaleX(0.9667);transform-origin:0 0;">Fn-23.jpg</div>
<div class="t" style="right:790px;top:332.30px;font-size:15px;line-height:15px;color:#000;transform:scaleX(0.87003);transform-origin:100% 0;">86 KB</div>
<div class="t" style="left:825px;top:332.30px;font-size:15px;line-height:15px;color:#000;transform:scaleX(0.8951642000000001);transform-origin:0 0;">JPG file</div>
<div class="t" style="left:905.6px;top:332.30px;font-size:15px;line-height:15px;color:#000;transform:scaleX(0.9667);transform-origin:0 0;">2001/12/26 16...</div>
<div class="b" style="left:472px;top:352px;width:546px;height:22px;background:#F0F0F0"></div>
<div class="b" style="left:472px;top:374px;width:546px;height:2px;background:#DCDCDC"></div>
<svg style="left:478px;top:354px" width="15" height="19"><path d="M0.5 0.5 H10.5 L13.5 3.5 V17.5 H0.5 Z" fill="#F7F9FC" stroke="#8A8A8A"/><path d="M10.5 0.5 V3.5 H13.5" fill="#fff" stroke="#A8A8A8"/><rect x="2.5" y="5.5" width="7.5" height="7.5" fill="url(#ig)"/><path d="M2.5 13 L2.5 10.5 L5.5 8 L10 11.5 V13 Z" fill="#0B3A86" opacity="0.85"/><rect x="8" y="6.3" width="1.2" height="1.2" fill="#E8F4FF"/></svg>
<div class="t" style="left:497px;top:356.30px;font-size:15px;line-height:15px;color:#000;transform:scaleX(0.9667);transform-origin:0 0;">Fn-24.jpg</div>
<div class="t" style="right:790px;top:356.30px;font-size:15px;line-height:15px;color:#000;transform:scaleX(0.87003);transform-origin:100% 0;">75 KB</div>
<div class="t" style="left:825px;top:356.30px;font-size:15px;line-height:15px;color:#000;transform:scaleX(0.8951642000000001);transform-origin:0 0;">JPG file</div>
<div class="t" style="left:905.6px;top:356.30px;font-size:15px;line-height:15px;color:#000;transform:scaleX(0.9667);transform-origin:0 0;">2001/12/26 16...</div>
<div class="b" style="left:472px;top:376px;width:546px;height:22px;background:#F0F0F0"></div>
<div class="b" style="left:472px;top:398px;width:546px;height:2px;background:#DCDCDC"></div>
<svg style="left:478px;top:378px" width="15" height="19"><path d="M0.5 0.5 H10.5 L13.5 3.5 V17.5 H0.5 Z" fill="#F7F9FC" stroke="#8A8A8A"/><path d="M10.5 0.5 V3.5 H13.5" fill="#fff" stroke="#A8A8A8"/><rect x="2.5" y="5.5" width="7.5" height="7.5" fill="url(#ig)"/><path d="M2.5 13 L2.5 10.5 L5.5 8 L10 11.5 V13 Z" fill="#0B3A86" opacity="0.85"/><rect x="8" y="6.3" width="1.2" height="1.2" fill="#E8F4FF"/></svg>
<div class="t" style="left:497px;top:380.30px;font-size:15px;line-height:15px;color:#000;transform:scaleX(0.9667);transform-origin:0 0;">Fn-25.jpg</div>
<div class="t" style="right:790px;top:380.30px;font-size:15px;line-height:15px;color:#000;transform:scaleX(0.87003);transform-origin:100% 0;">29 KB</div>
<div class="t" style="left:825px;top:380.30px;font-size:15px;line-height:15px;color:#000;transform:scaleX(0.8951642000000001);transform-origin:0 0;">JPG file</div>
<div class="t" style="left:905.6px;top:380.30px;font-size:15px;line-height:15px;color:#000;transform:scaleX(0.9667);transform-origin:0 0;">2001/12/26 16...</div>
<div class="b" style="left:472px;top:400px;width:546px;height:22px;background:#F0F0F0"></div>
<div class="b" style="left:472px;top:422px;width:546px;height:2px;background:#DCDCDC"></div>
<svg style="left:478px;top:402px" width="15" height="19"><path d="M0.5 0.5 H10.5 L13.5 3.5 V17.5 H0.5 Z" fill="#F7F9FC" stroke="#8A8A8A"/><path d="M10.5 0.5 V3.5 H13.5" fill="#fff" stroke="#A8A8A8"/><rect x="2.5" y="5.5" width="7.5" height="7.5" fill="url(#ig)"/><path d="M2.5 13 L2.5 10.5 L5.5 8 L10 11.5 V13 Z" fill="#0B3A86" opacity="0.85"/><rect x="8" y="6.3" width="1.2" height="1.2" fill="#E8F4FF"/></svg>
<div class="t" style="left:497px;top:404.30px;font-size:15px;line-height:15px;color:#000;transform:scaleX(0.9667);transform-origin:0 0;">Fn-26.jpg</div>
<div class="t" style="right:790px;top:404.30px;font-size:15px;line-height:15px;color:#000;transform:scaleX(0.87003);transform-origin:100% 0;">117 KB</div>
<div class="t" style="left:825px;top:404.30px;font-size:15px;line-height:15px;color:#000;transform:scaleX(0.8951642000000001);transform-origin:0 0;">JPG file</div>
<div class="t" style="left:905.6px;top:404.30px;font-size:15px;line-height:15px;color:#000;transform:scaleX(0.9667);transform-origin:0 0;">2001/12/27 07...</div>
<div class="b" style="left:472px;top:424px;width:546px;height:22px;background:#F0F0F0"></div>
<div class="b" style="left:472px;top:446px;width:546px;height:2px;background:#DCDCDC"></div>
<svg style="left:478px;top:426px" width="15" height="19"><path d="M0.5 0.5 H10.5 L13.5 3.5 V17.5 H0.5 Z" fill="#F7F9FC" stroke="#8A8A8A"/><path d="M10.5 0.5 V3.5 H13.5" fill="#fff" stroke="#A8A8A8"/><rect x="2.5" y="5.5" width="7.5" height="7.5" fill="url(#ig)"/><path d="M2.5 13 L2.5 10.5 L5.5 8 L10 11.5 V13 Z" fill="#0B3A86" opacity="0.85"/><rect x="8" y="6.3" width="1.2" height="1.2" fill="#E8F4FF"/></svg>
<div class="t" style="left:497px;top:428.30px;font-size:15px;line-height:15px;color:#000;transform:scaleX(0.9667);transform-origin:0 0;">Fn-27.jpg</div>
<div class="t" style="right:790px;top:428.30px;font-size:15px;line-height:15px;color:#000;transform:scaleX(0.87003);transform-origin:100% 0;">177 KB</div>
<div class="t" style="left:825px;top:428.30px;font-size:15px;line-height:15px;color:#000;transform:scaleX(0.8951642000000001);transform-origin:0 0;">JPG file</div>
<div class="t" style="left:905.6px;top:428.30px;font-size:15px;line-height:15px;color:#000;transform:scaleX(0.9667);transform-origin:0 0;">2020/06/22 08...</div>
<div class="b" style="left:472px;top:448px;width:546px;height:22px;background:#F0F0F0"></div>
<div class="b" style="left:472px;top:470px;width:546px;height:2px;background:#DCDCDC"></div>
<svg style="left:478px;top:450px" width="15" height="19"><path d="M0.5 0.5 H10.5 L13.5 3.5 V17.5 H0.5 Z" fill="#F7F9FC" stroke="#8A8A8A"/><path d="M10.5 0.5 V3.5 H13.5" fill="#fff" stroke="#A8A8A8"/><rect x="2.5" y="5.5" width="7.5" height="7.5" fill="url(#ig)"/><path d="M2.5 13 L2.5 10.5 L5.5 8 L10 11.5 V13 Z" fill="#0B3A86" opacity="0.85"/><rect x="8" y="6.3" width="1.2" height="1.2" fill="#E8F4FF"/></svg>
<div class="t" style="left:497px;top:452.30px;font-size:15px;line-height:15px;color:#000;transform:scaleX(0.9667);transform-origin:0 0;">Fn-28.jpg</div>
<div class="t" style="right:790px;top:452.30px;font-size:15px;line-height:15px;color:#000;transform:scaleX(0.87003);transform-origin:100% 0;">187 KB</div>
<div class="t" style="left:825px;top:452.30px;font-size:15px;line-height:15px;color:#000;transform:scaleX(0.8951642000000001);transform-origin:0 0;">JPG file</div>
<div class="t" style="left:905.6px;top:452.30px;font-size:15px;line-height:15px;color:#000;transform:scaleX(0.9667);transform-origin:0 0;">2020/06/22 08...</div>
<div class="b" style="left:472px;top:472px;width:546px;height:22px;background:#F0F0F0"></div>
<div class="b" style="left:472px;top:494px;width:546px;height:2px;background:#DCDCDC"></div>
<svg style="left:478px;top:474px" width="15" height="19"><path d="M0.5 0.5 H10.5 L13.5 3.5 V17.5 H0.5 Z" fill="#F7F9FC" stroke="#8A8A8A"/><path d="M10.5 0.5 V3.5 H13.5" fill="#fff" stroke="#A8A8A8"/><rect x="2.5" y="5.5" width="7.5" height="7.5" fill="url(#ig)"/><path d="M2.5 13 L2.5 10.5 L5.5 8 L10 11.5 V13 Z" fill="#0B3A86" opacity="0.85"/><rect x="8" y="6.3" width="1.2" height="1.2" fill="#E8F4FF"/></svg>
<div class="t" style="left:497px;top:476.30px;font-size:15px;line-height:15px;color:#000;transform:scaleX(0.9667);transform-origin:0 0;">Fn-29.jpg</div>
<div class="t" style="right:790px;top:476.30px;font-size:15px;line-height:15px;color:#000;transform:scaleX(0.87003);transform-origin:100% 0;">132 KB</div>
<div class="t" style="left:825px;top:476.30px;font-size:15px;line-height:15px;color:#000;transform:scaleX(0.8951642000000001);transform-origin:0 0;">JPG file</div>
<div class="t" style="left:905.6px;top:476.30px;font-size:15px;line-height:15px;color:#000;transform:scaleX(0.9667);transform-origin:0 0;">2020/06/22 08...</div>
<div class="b" style="left:472px;top:496px;width:546px;height:22px;background:#F0F0F0"></div>
<div class="b" style="left:472px;top:518px;width:546px;height:2px;background:#DCDCDC"></div>
<svg style="left:478px;top:498px" width="15" height="19"><path d="M0.5 0.5 H10.5 L13.5 3.5 V17.5 H0.5 Z" fill="#F7F9FC" stroke="#8A8A8A"/><path d="M10.5 0.5 V3.5 H13.5" fill="#fff" stroke="#A8A8A8"/><rect x="2.5" y="5.5" width="7.5" height="7.5" fill="url(#ig)"/><path d="M2.5 13 L2.5 10.5 L5.5 8 L10 11.5 V13 Z" fill="#0B3A86" opacity="0.85"/><rect x="8" y="6.3" width="1.2" height="1.2" fill="#E8F4FF"/></svg>
<div class="t" style="left:497px;top:500.30px;font-size:15px;line-height:15px;color:#000;transform:scaleX(0.9667);transform-origin:0 0;">Fn-30.jpg</div>
<div class="t" style="right:790px;top:500.30px;font-size:15px;line-height:15px;color:#000;transform:scaleX(0.87003);transform-origin:100% 0;">90 KB</div>
<div class="t" style="left:825px;top:500.30px;font-size:15px;line-height:15px;color:#000;transform:scaleX(0.8951642000000001);transform-origin:0 0;">JPG file</div>
<div class="t" style="left:905.6px;top:500.30px;font-size:15px;line-height:15px;color:#000;transform:scaleX(0.9667);transform-origin:0 0;">2020/06/22 08...</div>
<div class="b" style="left:472px;top:520px;width:546px;height:22px;background:#F0F0F0"></div>
<div class="b" style="left:472px;top:542px;width:546px;height:2px;background:#DCDCDC"></div>
<svg style="left:478px;top:522px" width="15" height="19"><path d="M0.5 0.5 H10.5 L13.5 3.5 V17.5 H0.5 Z" fill="#F7F9FC" stroke="#8A8A8A"/><path d="M10.5 0.5 V3.5 H13.5" fill="#fff" stroke="#A8A8A8"/><rect x="2.5" y="5.5" width="7.5" height="7.5" fill="url(#ig)"/><path d="M2.5 13 L2.5 10.5 L5.5 8 L10 11.5 V13 Z" fill="#0B3A86" opacity="0.85"/><rect x="8" y="6.3" width="1.2" height="1.2" fill="#E8F4FF"/></svg>
<div class="t" style="left:497px;top:524.30px;font-size:15px;line-height:15px;color:#000;transform:scaleX(0.9667);transform-origin:0 0;">Fn-31.jpg</div>
<div class="t" style="right:790px;top:524.30px;font-size:15px;line-height:15px;color:#000;transform:scaleX(0.87003);transform-origin:100% 0;">82 KB</div>
<div class="t" style="left:825px;top:524.30px;font-size:15px;line-height:15px;color:#000;transform:scaleX(0.8951642000000001);transform-origin:0 0;">JPG file</div>
<div class="t" style="left:905.6px;top:524.30px;font-size:15px;line-height:15px;color:#000;transform:scaleX(0.9667);transform-origin:0 0;">2020/06/22 08...</div>
<div class="b" style="left:472px;top:544px;width:546px;height:22px;background:#F0F0F0"></div>
<div class="b" style="left:472px;top:566px;width:546px;height:2px;background:#DCDCDC"></div>
<svg style="left:478px;top:546px" width="15" height="19"><path d="M0.5 0.5 H10.5 L13.5 3.5 V17.5 H0.5 Z" fill="#F7F9FC" stroke="#8A8A8A"/><path d="M10.5 0.5 V3.5 H13.5" fill="#fff" stroke="#A8A8A8"/><rect x="2.5" y="5.5" width="7.5" height="7.5" fill="url(#ig)"/><path d="M2.5 13 L2.5 10.5 L5.5 8 L10 11.5 V13 Z" fill="#0B3A86" opacity="0.85"/><rect x="8" y="6.3" width="1.2" height="1.2" fill="#E8F4FF"/></svg>
<div class="t" style="left:497px;top:548.30px;font-size:15px;line-height:15px;color:#000;transform:scaleX(0.9667);transform-origin:0 0;">Fn-32.jpg</div>
<div class="t" style="right:790px;top:548.30px;font-size:15px;line-height:15px;color:#000;transform:scaleX(0.87003);transform-origin:100% 0;">92 KB</div>
<div class="t" style="left:825px;top:548.30px;font-size:15px;line-height:15px;color:#000;transform:scaleX(0.8951642000000001);transform-origin:0 0;">JPG file</div>
<div class="t" style="left:905.6px;top:548.30px;font-size:15px;line-height:15px;color:#000;transform:scaleX(0.9667);transform-origin:0 0;">2001/12/28 08...</div>
<div class="b" style="left:472px;top:568px;width:546px;height:22px;background:#F0F0F0"></div>
<div class="b" style="left:472px;top:590px;width:546px;height:2px;background:#DCDCDC"></div>
<svg style="left:478px;top:570px" width="15" height="19"><path d="M0.5 0.5 H10.5 L13.5 3.5 V17.5 H0.5 Z" fill="#F7F9FC" stroke="#8A8A8A"/><path d="M10.5 0.5 V3.5 H13.5" fill="#fff" stroke="#A8A8A8"/><rect x="2.5" y="5.5" width="7.5" height="7.5" fill="url(#ig)"/><path d="M2.5 13 L2.5 10.5 L5.5 8 L10 11.5 V13 Z" fill="#0B3A86" opacity="0.85"/><rect x="8" y="6.3" width="1.2" height="1.2" fill="#E8F4FF"/></svg>
<div class="t" style="left:497px;top:572.30px;font-size:15px;line-height:15px;color:#000;transform:scaleX(0.9667);transform-origin:0 0;">Fn-33.jpg</div>
<div class="t" style="right:790px;top:572.30px;font-size:15px;line-height:15px;color:#000;transform:scaleX(0.87003);transform-origin:100% 0;">79 KB</div>
<div class="t" style="left:825px;top:572.30px;font-size:15px;line-height:15px;color:#000;transform:scaleX(0.8951642000000001);transform-origin:0 0;">JPG file</div>
<div class="t" style="left:905.6px;top:572.30px;font-size:15px;line-height:15px;color:#000;transform:scaleX(0.9667);transform-origin:0 0;">2001/12/28 08...</div>
<div class="b" style="left:472px;top:592px;width:546px;height:22px;background:#F0F0F0"></div>
<div class="b" style="left:472px;top:614px;width:546px;height:2px;background:#DCDCDC"></div>
<svg style="left:478px;top:594px" width="15" height="19"><path d="M0.5 0.5 H10.5 L13.5 3.5 V17.5 H0.5 Z" fill="#F7F9FC" stroke="#8A8A8A"/><path d="M10.5 0.5 V3.5 H13.5" fill="#fff" stroke="#A8A8A8"/><rect x="2.5" y="5.5" width="7.5" height="7.5" fill="url(#ig)"/><path d="M2.5 13 L2.5 10.5 L5.5 8 L10 11.5 V13 Z" fill="#0B3A86" opacity="0.85"/><rect x="8" y="6.3" width="1.2" height="1.2" fill="#E8F4FF"/></svg>
<div class="t" style="left:497px;top:596.30px;font-size:15px;line-height:15px;color:#000;transform:scaleX(0.9667);transform-origin:0 0;">Fn-34.jpg</div>
<div class="t" style="right:790px;top:596.30px;font-size:15px;line-height:15px;color:#000;transform:scaleX(0.87003);transform-origin:100% 0;">89 KB</div>
<div class="t" style="left:825px;top:596.30px;font-size:15px;line-height:15px;color:#000;transform:scaleX(0.8951642000000001);transform-origin:0 0;">JPG file</div>
<div class="t" style="left:905.6px;top:596.30px;font-size:15px;line-height:15px;color:#000;transform:scaleX(0.9667);transform-origin:0 0;">2020/06/22 08...</div>
<div class="b" style="left:472px;top:616px;width:546px;height:22px;background:#F0F0F0"></div>
<div class="b" style="left:472px;top:638px;width:546px;height:2px;background:#DCDCDC"></div>
<svg style="left:478px;top:618px" width="15" height="19"><path d="M0.5 0.5 H10.5 L13.5 3.5 V17.5 H0.5 Z" fill="#F7F9FC" stroke="#8A8A8A"/><path d="M10.5 0.5 V3.5 H13.5" fill="#fff" stroke="#A8A8A8"/><rect x="2.5" y="5.5" width="7.5" height="7.5" fill="url(#ig)"/><path d="M2.5 13 L2.5 10.5 L5.5 8 L10 11.5 V13 Z" fill="#0B3A86" opacity="0.85"/><rect x="8" y="6.3" width="1.2" height="1.2" fill="#E8F4FF"/></svg>
<div class="t" style="left:497px;top:620.30px;font-size:15px;line-height:15px;color:#000;transform:scaleX(0.9667);transform-origin:0 0;">Fn-35.jpg</div>
<div class="t" style="right:790px;top:620.30px;font-size:15px;line-height:15px;color:#000;transform:scaleX(0.87003);transform-origin:100% 0;">38 KB</div>
<div class="t" style="left:825px;top:620.30px;font-size:15px;line-height:15px;color:#000;transform:scaleX(0.8951642000000001);transform-origin:0 0;">JPG file</div>
<div class="t" style="left:905.6px;top:620.30px;font-size:15px;line-height:15px;color:#000;transform:scaleX(0.9667);transform-origin:0 0;">2001/12/28 08...</div>
<div class="b" style="left:472px;top:640px;width:546px;height:22px;background:#F0F0F0"></div>
<div class="b" style="left:472px;top:662px;width:546px;height:2px;background:#DCDCDC"></div>
<svg style="left:478px;top:642px" width="15" height="19"><path d="M0.5 0.5 H10.5 L13.5 3.5 V17.5 H0.5 Z" fill="#F7F9FC" stroke="#8A8A8A"/><path d="M10.5 0.5 V3.5 H13.5" fill="#fff" stroke="#A8A8A8"/><rect x="2.5" y="5.5" width="7.5" height="7.5" fill="url(#ig)"/><path d="M2.5 13 L2.5 10.5 L5.5 8 L10 11.5 V13 Z" fill="#0B3A86" opacity="0.85"/><rect x="8" y="6.3" width="1.2" height="1.2" fill="#E8F4FF"/></svg>
<div class="t" style="left:497px;top:644.30px;font-size:15px;line-height:15px;color:#000;transform:scaleX(0.9667);transform-origin:0 0;">Fn-36.jpg</div>
<div class="t" style="right:790px;top:644.30px;font-size:15px;line-height:15px;color:#000;transform:scaleX(0.87003);transform-origin:100% 0;">66 KB</div>
<div class="t" style="left:825px;top:644.30px;font-size:15px;line-height:15px;color:#000;transform:scaleX(0.8951642000000001);transform-origin:0 0;">JPG file</div>
<div class="t" style="left:905.6px;top:644.30px;font-size:15px;line-height:15px;color:#000;transform:scaleX(0.9667);transform-origin:0 0;">2001/12/28 11...</div>
<div class="b" style="left:472px;top:664px;width:546px;height:22px;background:#F0F0F0"></div>
<div class="b" style="left:472px;top:686px;width:546px;height:2px;background:#DCDCDC"></div>
<svg style="left:478px;top:666px" width="15" height="19"><path d="M0.5 0.5 H10.5 L13.5 3.5 V17.5 H0.5 Z" fill="#F7F9FC" stroke="#8A8A8A"/><path d="M10.5 0.5 V3.5 H13.5" fill="#fff" stroke="#A8A8A8"/><rect x="2.5" y="5.5" width="7.5" height="7.5" fill="url(#ig)"/><path d="M2.5 13 L2.5 10.5 L5.5 8 L10 11.5 V13 Z" fill="#0B3A86" opacity="0.85"/><rect x="8" y="6.3" width="1.2" height="1.2" fill="#E8F4FF"/></svg>
<div class="t" style="left:497px;top:668.30px;font-size:15px;line-height:15px;color:#000;transform:scaleX(0.9667);transform-origin:0 0;">Fn-37.jpg</div>
<div class="t" style="right:790px;top:668.30px;font-size:15px;line-height:15px;color:#000;transform:scaleX(0.87003);transform-origin:100% 0;">116 KB</div>
<div class="t" style="left:825px;top:668.30px;font-size:15px;line-height:15px;color:#000;transform:scaleX(0.8951642000000001);transform-origin:0 0;">JPG file</div>
<div class="t" style="left:905.6px;top:668.30px;font-size:15px;line-height:15px;color:#000;transform:scaleX(0.9667);transform-origin:0 0;">2020/06/22 08...</div>
<div class="b" style="left:472px;top:688px;width:546px;height:22px;background:#F0F0F0"></div>
<div class="b" style="left:472px;top:710px;width:546px;height:2px;background:#DCDCDC"></div>
<svg style="left:478px;top:690px" width="15" height="19"><path d="M0.5 0.5 H10.5 L13.5 3.5 V17.5 H0.5 Z" fill="#F7F9FC" stroke="#8A8A8A"/><path d="M10.5 0.5 V3.5 H13.5" fill="#fff" stroke="#A8A8A8"/><rect x="2.5" y="5.5" width="7.5" height="7.5" fill="url(#ig)"/><path d="M2.5 13 L2.5 10.5 L5.5 8 L10 11.5 V13 Z" fill="#0B3A86" opacity="0.85"/><rect x="8" y="6.3" width="1.2" height="1.2" fill="#E8F4FF"/></svg>
<div class="t" style="left:497px;top:692.30px;font-size:15px;line-height:15px;color:#000;transform:scaleX(0.9667);transform-origin:0 0;">Fn-38.jpg</div>
<div class="t" style="right:790px;top:692.30px;font-size:15px;line-height:15px;color:#000;transform:scaleX(0.87003);transform-origin:100% 0;">144 KB</div>
<div class="t" style="left:825px;top:692.30px;font-size:15px;line-height:15px;color:#000;transform:scaleX(0.8951642000000001);transform-origin:0 0;">JPG file</div>
<div class="t" style="left:905.6px;top:692.30px;font-size:15px;line-height:15px;color:#000;transform:scaleX(0.9667);transform-origin:0 0;">2020/06/22 08...</div>
<div class="b" style="left:472px;top:712px;width:546px;height:22px;background:#F0F0F0"></div>
<div class="b" style="left:472px;top:734px;width:546px;height:2px;background:#DCDCDC"></div>
<svg style="left:478px;top:714px" width="15" height="19"><path d="M0.5 0.5 H10.5 L13.5 3.5 V17.5 H0.5 Z" fill="#F7F9FC" stroke="#8A8A8A"/><path d="M10.5 0.5 V3.5 H13.5" fill="#fff" stroke="#A8A8A8"/><rect x="2.5" y="5.5" width="7.5" height="7.5" fill="url(#ig)"/><path d="M2.5 13 L2.5 10.5 L5.5 8 L10 11.5 V13 Z" fill="#0B3A86" opacity="0.85"/><rect x="8" y="6.3" width="1.2" height="1.2" fill="#E8F4FF"/></svg>
<div class="t" style="left:497px;top:716.30px;font-size:15px;line-height:15px;color:#000;transform:scaleX(0.9667);transform-origin:0 0;">Fn-39.jpg</div>
<div class="t" style="right:790px;top:716.30px;font-size:15px;line-height:15px;color:#000;transform:scaleX(0.87003);transform-origin:100% 0;">164 KB</div>
<div class="t" style="left:825px;top:716.30px;font-size:15px;line-height:15px;color:#000;transform:scaleX(0.8951642000000001);transform-origin:0 0;">JPG file</div>
<div class="t" style="left:905.6px;top:716.30px;font-size:15px;line-height:15px;color:#000;transform:scaleX(0.9667);transform-origin:0 0;">2020/06/22 08...</div>
<div class="b" style="left:472px;top:736px;width:546px;height:22px;background:#F0F0F0"></div>
<div class="b" style="left:472px;top:758px;width:546px;height:2px;background:#DCDCDC"></div>
<svg style="left:478px;top:738px" width="15" height="19"><path d="M0.5 0.5 H10.5 L13.5 3.5 V17.5 H0.5 Z" fill="#F7F9FC" stroke="#8A8A8A"/><path d="M10.5 0.5 V3.5 H13.5" fill="#fff" stroke="#A8A8A8"/><rect x="2.5" y="5.5" width="7.5" height="7.5" fill="url(#ig)"/><path d="M2.5 13 L2.5 10.5 L5.5 8 L10 11.5 V13 Z" fill="#0B3A86" opacity="0.85"/><rect x="8" y="6.3" width="1.2" height="1.2" fill="#E8F4FF"/></svg>
<div class="t" style="left:497px;top:740.30px;font-size:15px;line-height:15px;color:#000;transform:scaleX(0.9667);transform-origin:0 0;">Fn-40.jpg</div>
<div class="t" style="right:790px;top:740.30px;font-size:15px;line-height:15px;color:#000;transform:scaleX(0.87003);transform-origin:100% 0;">137 KB</div>
<div class="t" style="left:825px;top:740.30px;font-size:15px;line-height:15px;color:#000;transform:scaleX(0.8951642000000001);transform-origin:0 0;">JPG file</div>
<div class="t" style="left:905.6px;top:740.30px;font-size:15px;line-height:15px;color:#000;transform:scaleX(0.9667);transform-origin:0 0;">2020/06/22 08...</div>
<div class="b" style="left:472px;top:760px;width:546px;height:22px;background:#F0F0F0"></div>
<div class="b" style="left:472px;top:782px;width:546px;height:2px;background:#DCDCDC"></div>
<svg style="left:478px;top:762px" width="15" height="19"><path d="M0.5 0.5 H10.5 L13.5 3.5 V17.5 H0.5 Z" fill="#F7F9FC" stroke="#8A8A8A"/><path d="M10.5 0.5 V3.5 H13.5" fill="#fff" stroke="#A8A8A8"/><rect x="2.5" y="5.5" width="7.5" height="7.5" fill="url(#ig)"/><path d="M2.5 13 L2.5 10.5 L5.5 8 L10 11.5 V13 Z" fill="#0B3A86" opacity="0.85"/><rect x="8" y="6.3" width="1.2" height="1.2" fill="#E8F4FF"/></svg>
<div class="t" style="left:497px;top:764.30px;font-size:15px;line-height:15px;color:#000;transform:scaleX(0.9667);transform-origin:0 0;">Fn-41.jpg</div>
<div class="t" style="right:790px;top:764.30px;font-size:15px;line-height:15px;color:#000;transform:scaleX(0.87003);transform-origin:100% 0;">193 KB</div>
<div class="t" style="left:825px;top:764.30px;font-size:15px;line-height:15px;color:#000;transform:scaleX(0.8951642000000001);transform-origin:0 0;">JPG file</div>
<div class="t" style="left:905.6px;top:764.30px;font-size:15px;line-height:15px;color:#000;transform:scaleX(0.9667);transform-origin:0 0;">2020/06/22 08...</div>
<div class="b" style="left:472px;top:784px;width:546px;height:22px;background:#F0F0F0"></div>
<div class="b" style="left:472px;top:806px;width:546px;height:2px;background:#DCDCDC"></div>
<svg style="left:478px;top:786px" width="15" height="19"><path d="M0.5 0.5 H10.5 L13.5 3.5 V17.5 H0.5 Z" fill="#F7F9FC" stroke="#8A8A8A"/><path d="M10.5 0.5 V3.5 H13.5" fill="#fff" stroke="#A8A8A8"/><rect x="2.5" y="5.5" width="7.5" height="7.5" fill="url(#ig)"/><path d="M2.5 13 L2.5 10.5 L5.5 8 L10 11.5 V13 Z" fill="#0B3A86" opacity="0.85"/><rect x="8" y="6.3" width="1.2" height="1.2" fill="#E8F4FF"/></svg>
<div class="t" style="left:497px;top:788.30px;font-size:15px;line-height:15px;color:#000;transform:scaleX(0.9667);transform-origin:0 0;">Fn-42.jpg</div>
<div class="t" style="right:790px;top:788.30px;font-size:15px;line-height:15px;color:#000;transform:scaleX(0.87003);transform-origin:100% 0;">149 KB</div>
<div class="t" style="left:825px;top:788.30px;font-size:15px;line-height:15px;color:#000;transform:scaleX(0.8951642000000001);transform-origin:0 0;">JPG file</div>
<div class="t" style="left:905.6px;top:788.30px;font-size:15px;line-height:15px;color:#000;transform:scaleX(0.9667);transform-origin:0 0;">2020/06/22 08...</div>
<div class="b" style="left:472px;top:808px;width:546px;height:22px;background:#F0F0F0"></div>
<div class="b" style="left:472px;top:830px;width:546px;height:2px;background:#DCDCDC"></div>
<svg style="left:478px;top:810px" width="15" height="19"><path d="M0.5 0.5 H10.5 L13.5 3.5 V17.5 H0.5 Z" fill="#F7F9FC" stroke="#8A8A8A"/><path d="M10.5 0.5 V3.5 H13.5" fill="#fff" stroke="#A8A8A8"/><rect x="2.5" y="5.5" width="7.5" height="7.5" fill="url(#ig)"/><path d="M2.5 13 L2.5 10.5 L5.5 8 L10 11.5 V13 Z" fill="#0B3A86" opacity="0.85"/><rect x="8" y="6.3" width="1.2" height="1.2" fill="#E8F4FF"/></svg>
<div class="t" style="left:497px;top:812.30px;font-size:15px;line-height:15px;color:#000;transform:scaleX(0.9667);transform-origin:0 0;">Fn-43.jpg</div>
<div class="t" style="right:790px;top:812.30px;font-size:15px;line-height:15px;color:#000;transform:scaleX(0.87003);transform-origin:100% 0;">118 KB</div>
<div class="t" style="left:825px;top:812.30px;font-size:15px;line-height:15px;color:#000;transform:scaleX(0.8951642000000001);transform-origin:0 0;">JPG file</div>
<div class="t" style="left:905.6px;top:812.30px;font-size:15px;line-height:15px;color:#000;transform:scaleX(0.9667);transform-origin:0 0;">2020/06/22 08...</div>
<div class="b" style="left:1037px;top:157px;width:21px;height:680px;background:#fff;border-left:1px solid #BDBDBD;border-right:1px solid #BDBDBD"></div>
<div class="b" style="left:1037px;top:157px;width:21px;height:20px;background:#fff;border:1px solid #BDBDBD"></div>
<svg style="left:1042px;top:164px" width="10" height="6"><path d="M0.5 5.5 L5.0 0.8 L9.5 5.5" fill="none" stroke="#606060" stroke-width="1.3"/></svg>
<div class="b" style="left:1037px;top:817px;width:21px;height:20px;background:#fff;border:1px solid #BDBDBD"></div>
<svg style="left:1042px;top:824px" width="10" height="6"><path d="M0.5 0.5 L5.0 5.2 L9.5 0.5" fill="none" stroke="#606060" stroke-width="1.3"/></svg>
<div class="b" style="left:1037px;top:424px;width:21px;height:392px;background:#DADADA;border:1px solid #A0A0A0"></div>
<div class="b" style="left:1043px;top:615.0px;width:9px;height:2.0px;background:#606060"></div>
<div class="b" style="left:1043px;top:619.0px;width:9px;height:2.0px;background:#606060"></div>
<div class="b" style="left:1043px;top:623.0px;width:9px;height:2.0px;background:#606060"></div>
<div class="b" style="left:475px;top:846px;width:132px;height:27px;background:#E1E1E1;border:1px solid #777;box-shadow:inset 0 0 0 1px #EAEAEA"></div>
<div class="t" style="left:341.0px;width:400px;text-align:center;top:852.90px;font-size:15px;line-height:15px;color:#000;transform:scaleX(0.9667);transform-origin:50% 0;">ExifTool direct</div>
<div class="b" style="left:694px;top:846px;width:133px;height:27px;background:#E1E1E1;border:1px solid #777;box-shadow:inset 0 0 0 1px #EAEAEA"></div>
<div class="t" style="left:560.5px;width:400px;text-align:center;top:852.90px;font-size:15px;line-height:15px;color:#000;transform:scaleX(0.9667);transform-origin:50% 0;">Show Log window</div>
<div class="b" style="left:1069px;top:54px;width:529px;height:25px;background:#D3D3D3"></div>
<div class="b" style="left:1069px;top:54px;width:529px;height:1px;background:#FAFAFA"></div>
<div class="b" style="left:1069px;top:78px;width:530px;height:803px;background:#F0F0F0;border:1px solid #7F7F7F;border-right:none"></div>
<div class="b" style="left:1073px;top:79px;width:523px;height:78px;background:linear-gradient(to bottom,#F2F2F2 0px,#E8E8E8 12px,#D8D8D8 28px,#D1D1D1 40px,#D0D0D0 100%)"></div>
<div class="b" style="left:1073px;top:837px;width:523px;height:43px;background:linear-gradient(to bottom,#F2F2F2 0px,#E8E8E8 12px,#D8D8D8 28px,#D1D1D1 40px,#D0D0D0 100%)"></div>
<div class="b" style="left:1133px;top:55px;width:71px;height:24px;background:#D3D3D3;border:1px solid #9A9A9A;border-bottom:none"></div>
<div class="b" style="left:1071.5px;top:55px;width:62.5px;height:24.5px;background:#F0F0F0;border:1px solid #7F7F7F;border-bottom:none"></div>
<div class="t" style="left:1074.75px;top:60.99px;font-size:11px;line-height:11px;color:#000;transform:scaleX(1.02);transform-origin:0 0;">Metadata</div>
<div class="t" style="left:1136.5px;top:59.60px;font-size:13px;line-height:13px;color:#111;transform:scaleX(0.995);transform-origin:0 0;">GoogleMap</div>
<div class="b" style="left:1077px;top:86px;width:63px;height:25px;background:#E1E1E1;border:1px solid #777;box-shadow:inset 0 0 0 1px #EAEAEA"></div>
<div class="t" style="left:908.5px;width:400px;text-align:center;top:92.30px;font-size:15px;line-height:15px;color:#000;transform:scaleX(0.9667);transform-origin:50% 0;">Exif</div>
<div class="b" style="left:1142px;top:86px;width:53px;height:25px;background:#E1E1E1;border:1px solid #777;box-shadow:inset 0 0 0 1px #EAEAEA"></div>
<div class="t" style="left:968.5px;width:400px;text-align:center;top:92.30px;font-size:15px;line-height:15px;color:#000;transform:scaleX(0.9667);transform-origin:50% 0;">Xmp</div>
<div class="b" style="left:1197px;top:86px;width:53px;height:25px;background:#E1E1E1;border:1px solid #777;box-shadow:inset 0 0 0 1px #EAEAEA"></div>
<div class="t" style="left:1023.5px;width:400px;text-align:center;top:92.30px;font-size:15px;line-height:15px;color:#000;transform:scaleX(0.9667);transform-origin:50% 0;">Iptc</div>
<div class="b" style="left:1252px;top:86px;width:53px;height:25px;background:#E1E1E1;border:1px solid #777;box-shadow:inset 0 0 0 1px #EAEAEA"></div>
<div class="t" style="left:1078.5px;width:400px;text-align:center;top:92.30px;font-size:15px;line-height:15px;color:#000;transform:scaleX(0.9667);transform-origin:50% 0;">Maker</div>
<div class="b" style="left:1307px;top:86px;width:40px;height:25px;background:#E1E1E1;border:1px solid #777;box-shadow:inset 0 0 0 1px #EAEAEA"></div>
<div class="t" style="left:1127.0px;width:400px;text-align:center;top:92.30px;font-size:15px;line-height:15px;color:#000;transform:scaleX(0.9667);transform-origin:50% 0;">ALL</div>
<div class="b" style="left:1349px;top:86px;width:63px;height:25px;background:#E1E1E1;border:1px solid #777;box-shadow:inset 0 0 0 1px #EAEAEA"></div>
<div class="t" style="left:1180.5px;width:400px;text-align:center;top:92.30px;font-size:15px;line-height:15px;color:#000;transform:scaleX(0.9667);transform-origin:50% 0;">Custom</div>
<div class="b" style="left:1077px;top:121px;width:118px;height:27px;background:#C4E2F5;border:1px solid #2C6496;box-shadow:inset 0 0 0 1px #D6EEFC"></div>
<div class="t" style="left:936.0px;width:400px;text-align:center;top:127.90px;font-size:15px;line-height:15px;color:#000;transform:scaleX(0.9667);transform-origin:50% 0;">Workspace</div>
<div class="b" style="left:1073px;top:157px;width:523px;height:680px;background:#fff"></div>
<div class="b" style="left:1073px;top:158px;width:502px;height:24px;background:#FCFCFC"></div>
<div class="b" style="left:1217px;top:158px;width:1px;height:24px;background:#E5E5E5"></div>
<div class="t" style="left:1077.5px;top:162.30px;font-size:15px;line-height:15px;color:#000;transform:scaleX(0.9667);transform-origin:0 0;">Tag name</div>
<div class="t" style="left:1222.5px;top:162.30px;font-size:15px;line-height:15px;color:#000;transform:scaleX(0.9667);transform-origin:0 0;">Value</div>
<div class="b" style="left:1073px;top:182px;width:501px;height:655px;overflow:hidden">
<div class="b" style="left:0px;top:24px;width:501px;height:1px;background:#F0F0F0"></div>
<div class="b" style="left:144px;top:0px;width:1px;height:25px;background:#F0F0F0"></div>
<div class="b" style="left:0px;top:0px;width:501px;height:24px;background:#DDEBFC;border:1px solid #1E90E6"></div>
<div class="b" style="left:1px;top:1px;width:499px;height:22px;border:1px dotted #000"></div>
<div class="b" style="left:0;top:0px;width:143px;height:24px;overflow:hidden">
<div class="t" style="left:3.2px;top:5.30px;font-size:15px;line-height:15px;color:#000;transform:scaleX(0.9667);transform-origin:0 0;">Accession/ID Numbe</div>
</div>
<div class="t" style="left:148.2px;top:5.30px;font-size:15px;line-height:15px;color:#000;transform:scaleX(0.9667);transform-origin:0 0;">-</div>
<div class="b" style="left:0px;top:49px;width:501px;height:1px;background:#F0F0F0"></div>
<div class="b" style="left:144px;top:25px;width:1px;height:25px;background:#F0F0F0"></div>
<div class="b" style="left:0;top:25px;width:143px;height:24px;overflow:hidden">
<div class="t" style="left:3.2px;top:5.30px;font-size:15px;line-height:15px;color:#000;transform:scaleX(0.9667);transform-origin:0 0;">DC:Title</div>
</div>
<div class="t" style="left:148.2px;top:30.30px;font-size:15px;line-height:15px;color:#000;transform:scaleX(0.9667);transform-origin:0 0;">-</div>
<div class="b" style="left:0px;top:74px;width:501px;height:1px;background:#F0F0F0"></div>
<div class="b" style="left:144px;top:50px;width:1px;height:25px;background:#F0F0F0"></div>
<div class="b" style="left:0;top:50px;width:143px;height:24px;overflow:hidden">
<div class="t" style="left:3.2px;top:5.30px;font-size:15px;line-height:15px;color:#000;transform:scaleX(0.9667);transform-origin:0 0;">DC:Description</div>
</div>
<div class="t" style="left:148.2px;top:55.30px;font-size:15px;line-height:15px;color:#000;transform:scaleX(0.9667);transform-origin:0 0;">-</div>
<div class="b" style="left:0px;top:75px;width:144px;height:24px;background:#FFFFC4"></div>
<div class="b" style="left:0px;top:99px;width:501px;height:1px;background:#F0F0F0"></div>
<div class="b" style="left:144px;top:75px;width:1px;height:25px;background:#F0F0F0"></div>
<div class="b" style="left:0;top:75px;width:143px;height:24px;overflow:hidden">
<div class="t" style="left:3.2px;top:5.30px;font-size:15px;line-height:15px;color:#0000CC;transform:scaleX(0.9667);transform-origin:0 0;">*DC:Subject</div>
</div>
<div class="t" style="left:148.2px;top:80.30px;font-size:15px;line-height:15px;color:#000;transform:scaleX(0.9667);transform-origin:0 0;">Photos at the Frazer Nash factory</div>
<div class="b" style="left:0px;top:124px;width:501px;height:1px;background:#F0F0F0"></div>
<div class="b" style="left:144px;top:100px;width:1px;height:25px;background:#F0F0F0"></div>
<div class="b" style="left:0;top:100px;width:143px;height:24px;overflow:hidden">
<div class="t" style="left:3.2px;top:5.30px;font-size:15px;line-height:15px;color:#000;transform:scaleX(0.9667);transform-origin:0 0;">IPTC:Keywords</div>
</div>
<div class="t" style="left:148.2px;top:105.30px;font-size:15px;line-height:15px;color:#000;transform:scaleX(0.9667);transform-origin:0 0;">-</div>
<div class="b" style="left:0px;top:149px;width:501px;height:1px;background:#F0F0F0"></div>
<div class="b" style="left:144px;top:125px;width:1px;height:25px;background:#F0F0F0"></div>
<div class="b" style="left:0;top:125px;width:143px;height:24px;overflow:hidden">
<div class="t" style="left:3.2px;top:5.30px;font-size:15px;line-height:15px;color:#000;transform:scaleX(0.9667);transform-origin:0 0;">DC:Resource Identifie</div>
</div>
<div class="t" style="left:148.2px;top:130.30px;font-size:15px;line-height:15px;color:#000;transform:scaleX(0.9667);transform-origin:0 0;">-</div>
<div class="b" style="left:0px;top:174px;width:501px;height:1px;background:#F0F0F0"></div>
<div class="b" style="left:144px;top:150px;width:1px;height:25px;background:#F0F0F0"></div>
<div class="b" style="left:0;top:150px;width:143px;height:24px;overflow:hidden">
<div class="t" style="left:3.2px;top:5.30px;font-size:15px;line-height:15px;color:#000;transform:scaleX(0.9667);transform-origin:0 0;">DC:Relation</div>
</div>
<div class="t" style="left:148.2px;top:155.30px;font-size:15px;line-height:15px;color:#000;transform:scaleX(0.9667);transform-origin:0 0;">-</div>
<div class="b" style="left:0px;top:199px;width:501px;height:1px;background:#F0F0F0"></div>
<div class="b" style="left:144px;top:175px;width:1px;height:25px;background:#F0F0F0"></div>
<div class="b" style="left:0;top:175px;width:143px;height:24px;overflow:hidden">
<div class="t" style="left:3.2px;top:5.30px;font-size:15px;line-height:15px;color:#000;transform:scaleX(0.9667);transform-origin:0 0;">DC:Source</div>
</div>
<div class="t" style="left:148.2px;top:180.30px;font-size:15px;line-height:15px;color:#000;transform:scaleX(0.9667);transform-origin:0 0;">-</div>
<div class="b" style="left:0px;top:200px;width:144px;height:24px;background:#FFFFC4"></div>
<div class="b" style="left:0px;top:224px;width:501px;height:1px;background:#F0F0F0"></div>
<div class="b" style="left:144px;top:200px;width:1px;height:25px;background:#F0F0F0"></div>
<div class="b" style="left:0;top:200px;width:143px;height:24px;overflow:hidden">
<div class="t" style="left:3.2px;top:5.30px;font-size:15px;line-height:15px;color:#0000CC;transform:scaleX(0.9667);transform-origin:0 0;">*DC:Creator</div>
</div>
<div class="t" style="left:148.2px;top:205.30px;font-size:15px;line-height:15px;color:#000;transform:scaleX(0.9667);transform-origin:0 0;">John Fearn</div>
<div class="b" style="left:0px;top:225px;width:144px;height:24px;background:#FFFFC4"></div>
<div class="b" style="left:0px;top:249px;width:501px;height:1px;background:#F0F0F0"></div>
<div class="b" style="left:144px;top:225px;width:1px;height:25px;background:#F0F0F0"></div>
<div class="b" style="left:0;top:225px;width:143px;height:24px;overflow:hidden">
<div class="t" style="left:3.2px;top:5.30px;font-size:15px;line-height:15px;color:#0000CC;transform:scaleX(0.9667);transform-origin:0 0;">*DC:Date</div>
</div>
<div class="t" style="left:148.2px;top:230.30px;font-size:15px;line-height:15px;color:#000;transform:scaleX(0.9667);transform-origin:0 0;">19522:03:01</div>
<div class="b" style="left:0px;top:250px;width:144px;height:24px;background:#FFFFC4"></div>
<div class="b" style="left:0px;top:274px;width:501px;height:1px;background:#F0F0F0"></div>
<div class="b" style="left:144px;top:250px;width:1px;height:25px;background:#F0F0F0"></div>
<div class="b" style="left:0;top:250px;width:143px;height:24px;overflow:hidden">
<div class="t" style="left:3.2px;top:5.30px;font-size:15px;line-height:15px;color:#0000CC;transform:scaleX(0.9667);transform-origin:0 0;">*DC:Contributor</div>
</div>
<div class="t" style="left:148.2px;top:255.30px;font-size:15px;line-height:15px;color:#000;transform:scaleX(0.9667);transform-origin:0 0;">James Trigwell</div>
<div class="b" style="left:0px;top:275px;width:144px;height:24px;background:#FFFFC4"></div>
<div class="b" style="left:0px;top:299px;width:501px;height:1px;background:#F0F0F0"></div>
<div class="b" style="left:144px;top:275px;width:1px;height:25px;background:#F0F0F0"></div>
<div class="b" style="left:0;top:275px;width:143px;height:24px;overflow:hidden">
<div class="t" style="left:3.2px;top:5.30px;font-size:15px;line-height:15px;color:#0000CC;transform:scaleX(0.9667);transform-origin:0 0;">*DC:Coverage</div>
</div>
<div class="t" style="left:148.2px;top:280.30px;font-size:15px;line-height:15px;color:#000;transform:scaleX(0.9667);transform-origin:0 0;">1952</div>
<div class="b" style="left:0px;top:324px;width:501px;height:1px;background:#F0F0F0"></div>
<div class="b" style="left:144px;top:300px;width:1px;height:25px;background:#F0F0F0"></div>
<div class="b" style="left:0;top:300px;width:143px;height:24px;overflow:hidden">
<div class="t" style="left:3.2px;top:5.30px;font-size:15px;line-height:15px;color:#000;transform:scaleX(0.9667);transform-origin:0 0;">DC:Format</div>
</div>
<div class="t" style="left:148.2px;top:305.30px;font-size:15px;line-height:15px;color:#000;transform:scaleX(0.9667);transform-origin:0 0;">-</div>
<div class="b" style="left:0px;top:349px;width:501px;height:1px;background:#F0F0F0"></div>
<div class="b" style="left:144px;top:325px;width:1px;height:25px;background:#F0F0F0"></div>
<div class="b" style="left:0;top:325px;width:143px;height:24px;overflow:hidden">
<div class="t" style="left:3.2px;top:5.30px;font-size:15px;line-height:15px;color:#000;transform:scaleX(0.9667);transform-origin:0 0;">DC:Type</div>
</div>
<div class="t" style="left:148.2px;top:330.30px;font-size:15px;line-height:15px;color:#000;transform:scaleX(0.9667);transform-origin:0 0;">-</div>
<div class="b" style="left:0px;top:374px;width:501px;height:1px;background:#F0F0F0"></div>
<div class="b" style="left:144px;top:350px;width:1px;height:25px;background:#F0F0F0"></div>
<div class="b" style="left:0;top:350px;width:143px;height:24px;overflow:hidden">
<div class="t" style="left:3.2px;top:5.30px;font-size:15px;line-height:15px;color:#000;transform:scaleX(0.9667);transform-origin:0 0;">DC:Language</div>
</div>
<div class="t" style="left:148.2px;top:355.30px;font-size:15px;line-height:15px;color:#000;transform:scaleX(0.9667);transform-origin:0 0;">-</div>
<div class="b" style="left:0px;top:399px;width:501px;height:1px;background:#F0F0F0"></div>
<div class="b" style="left:144px;top:375px;width:1px;height:25px;background:#F0F0F0"></div>
<div class="b" style="left:0;top:375px;width:143px;height:24px;overflow:hidden">
<div class="t" style="left:3.2px;top:5.30px;font-size:15px;line-height:15px;color:#000;transform:scaleX(0.9667);transform-origin:0 0;">DC:Publisher</div>
</div>
<div class="t" style="left:148.2px;top:380.30px;font-size:15px;line-height:15px;color:#000;transform:scaleX(0.9667);transform-origin:0 0;">-</div>
<div class="b" style="left:0px;top:424px;width:501px;height:1px;background:#F0F0F0"></div>
<div class="b" style="left:144px;top:400px;width:1px;height:25px;background:#F0F0F0"></div>
<div class="b" style="left:0;top:400px;width:143px;height:24px;overflow:hidden">
<div class="t" style="left:3.2px;top:5.30px;font-size:15px;line-height:15px;color:#000;transform:scaleX(0.9667);transform-origin:0 0;">DC:Rights</div>
</div>
<div class="t" style="left:148.2px;top:405.30px;font-size:15px;line-height:15px;color:#000;transform:scaleX(0.9667);transform-origin:0 0;">-</div>
<div class="b" style="left:0px;top:449px;width:501px;height:1px;background:#F0F0F0"></div>
<div class="b" style="left:144px;top:425px;width:1px;height:25px;background:#F0F0F0"></div>
<div class="b" style="left:0;top:425px;width:143px;height:24px;overflow:hidden">
<div class="t" style="left:3.2px;top:5.30px;font-size:15px;line-height:15px;color:#000;transform:scaleX(0.9667);transform-origin:0 0;">Artist/Author</div>
</div>
<div class="t" style="left:148.2px;top:430.30px;font-size:15px;line-height:15px;color:#000;transform:scaleX(0.9667);transform-origin:0 0;">-</div>
<div class="b" style="left:0px;top:450px;width:144px;height:24px;background:#FFFFC4"></div>
<div class="b" style="left:0px;top:474px;width:501px;height:1px;background:#F0F0F0"></div>
<div class="b" style="left:144px;top:450px;width:1px;height:25px;background:#F0F0F0"></div>
<div class="b" style="left:0;top:450px;width:143px;height:24px;overflow:hidden">
<div class="t" style="left:3.2px;top:5.30px;font-size:15px;line-height:15px;color:#0000CC;transform:scaleX(0.9667);transform-origin:0 0;">*Location</div>
</div>
<div class="t" style="left:148.2px;top:455.30px;font-size:15px;line-height:15px;color:#000;transform:scaleX(0.9667);transform-origin:0 0;">Isleworth, London, England</div>
<div class="b" style="left:0px;top:499px;width:501px;height:1px;background:#F0F0F0"></div>
<div class="b" style="left:144px;top:475px;width:1px;height:25px;background:#F0F0F0"></div>
<div class="b" style="left:0;top:475px;width:143px;height:24px;overflow:hidden">
<div class="t" style="left:3.2px;top:5.30px;font-size:15px;line-height:15px;color:#000;transform:scaleX(0.9667);transform-origin:0 0;">Primary Object Numb</div>
</div>
<div class="t" style="left:148.2px;top:480.30px;font-size:15px;line-height:15px;color:#000;transform:scaleX(0.9667);transform-origin:0 0;">-</div>
<div class="b" style="left:0px;top:524px;width:501px;height:1px;background:#F0F0F0"></div>
<div class="b" style="left:144px;top:500px;width:1px;height:25px;background:#F0F0F0"></div>
<div class="b" style="left:0;top:500px;width:143px;height:24px;overflow:hidden">
<div class="t" style="left:3.2px;top:5.30px;font-size:15px;line-height:15px;color:#000;transform:scaleX(0.9667);transform-origin:0 0;">PDF Title</div>
</div>
<div class="t" style="left:148.2px;top:505.30px;font-size:15px;line-height:15px;color:#000;transform:scaleX(0.9667);transform-origin:0 0;">-</div>
<div class="b" style="left:0px;top:549px;width:501px;height:1px;background:#F0F0F0"></div>
<div class="b" style="left:144px;top:525px;width:1px;height:25px;background:#F0F0F0"></div>
<div class="b" style="left:0;top:525px;width:143px;height:24px;overflow:hidden">
<div class="t" style="left:3.2px;top:5.30px;font-size:15px;line-height:15px;color:#000;transform:scaleX(0.9667);transform-origin:0 0;">PDF Subject</div>
</div>
<div class="t" style="left:148.2px;top:530.30px;font-size:15px;line-height:15px;color:#000;transform:scaleX(0.9667);transform-origin:0 0;">-</div>
<div class="b" style="left:0px;top:574px;width:501px;height:1px;background:#F0F0F0"></div>
<div class="b" style="left:144px;top:550px;width:1px;height:25px;background:#F0F0F0"></div>
<div class="b" style="left:0;top:550px;width:143px;height:24px;overflow:hidden">
<div class="t" style="left:3.2px;top:5.30px;font-size:15px;line-height:15px;color:#000;transform:scaleX(0.9667);transform-origin:0 0;">PDF Keywords</div>
</div>
<div class="t" style="left:148.2px;top:555.30px;font-size:15px;line-height:15px;color:#000;transform:scaleX(0.9667);transform-origin:0 0;">-</div>
<div class="b" style="left:0px;top:599px;width:501px;height:1px;background:#F0F0F0"></div>
<div class="b" style="left:144px;top:575px;width:1px;height:25px;background:#F0F0F0"></div>
<div class="b" style="left:0;top:575px;width:143px;height:24px;overflow:hidden">
<div class="t" style="left:3.2px;top:5.30px;font-size:15px;line-height:15px;color:#000;transform:scaleX(0.9667);transform-origin:0 0;">CreateDate</div>
</div>
<div class="t" style="left:148.2px;top:580.30px;font-size:15px;line-height:15px;color:#000;transform:scaleX(0.9667);transform-origin:0 0;">-</div>
<div class="b" style="left:0px;top:624px;width:501px;height:1px;background:#F0F0F0"></div>
<div class="b" style="left:144px;top:600px;width:1px;height:25px;background:#F0F0F0"></div>
<div class="b" style="left:0;top:600px;width:143px;height:24px;overflow:hidden">
<div class="t" style="left:3.2px;top:5.30px;font-size:15px;line-height:15px;color:#000;transform:scaleX(0.9667);transform-origin:0 0;">DateTimeOriginal</div>
</div>
<div class="t" style="left:148.2px;top:605.30px;font-size:15px;line-height:15px;color:#000;transform:scaleX(0.9667);transform-origin:0 0;">-</div>
<div class="b" style="left:0px;top:649px;width:501px;height:1px;background:#F0F0F0"></div>
<div class="b" style="left:144px;top:625px;width:1px;height:25px;background:#F0F0F0"></div>
<div class="b" style="left:0;top:625px;width:143px;height:24px;overflow:hidden">
<div class="t" style="left:3.2px;top:5.30px;font-size:15px;line-height:15px;color:#000;transform:scaleX(0.9667);transform-origin:0 0;">FileAccessDate</div>
</div>
<div class="t" style="left:148.2px;top:630.30px;font-size:15px;line-height:15px;color:#000;transform:scaleX(0.9328655);transform-origin:0 0;">2001:12:23 12:55:16-08:00</div>
<div class="b" style="left:0px;top:674px;width:501px;height:1px;background:#F0F0F0"></div>
<div class="b" style="left:144px;top:650px;width:1px;height:25px;background:#F0F0F0"></div>
<div class="b" style="left:0;top:650px;width:143px;height:24px;overflow:hidden">
<div class="t" style="left:3.2px;top:5.30px;font-size:15px;line-height:15px;color:#000;transform:scaleX(0.9667);transform-origin:0 0;"></div>
</div>
<div class="t" style="left:148.2px;top:655.30px;font-size:15px;line-height:15px;color:#000;transform:scaleX(0.9667);transform-origin:0 0;"></div>
</div>
<div class="b" style="left:1575px;top:157px;width:21px;height:680px;background:#fff;border-left:1px solid #BDBDBD;border-right:1px solid #BDBDBD"></div>
<div class="b" style="left:1575px;top:157px;width:21px;height:20px;background:#fff;border:1px solid #BDBDBD"></div>
<svg style="left:1580px;top:164px" width="10" height="6"><path d="M0.5 5.5 L5.0 0.8 L9.5 5.5" fill="none" stroke="#606060" stroke-width="1.3"/></svg>
<div class="b" style="left:1575px;top:817px;width:21px;height:20px;background:#fff;border:1px solid #BDBDBD"></div>
<svg style="left:1580px;top:824px" width="10" height="6"><path d="M0.5 0.5 L5.0 5.2 L9.5 0.5" fill="none" stroke="#606060" stroke-width="1.3"/></svg>
<div class="b" style="left:1575px;top:178px;width:21px;height:21px;background:#DADADA;border:1px solid #A0A0A0"></div>
<div class="b" style="left:1581px;top:183.5px;width:9px;height:2.0px;background:#606060"></div>
<div class="b" style="left:1581px;top:187.5px;width:9px;height:2.0px;background:#606060"></div>
<div class="b" style="left:1581px;top:191.5px;width:9px;height:2.0px;background:#606060"></div>
<div class="b" style="left:1077px;top:846px;width:53px;height:27px;background:#E1E1E1;border:1px solid #777;box-shadow:inset 0 0 0 1px #EAEAEA"></div>
<div class="t" style="left:903.5px;width:400px;text-align:center;top:853.30px;font-size:15px;line-height:15px;color:#000;transform:scaleX(0.9667);transform-origin:50% 0;">Large</div>
<div class="b" style="left:1136px;top:845px;width:390px;height:26px;background:#fff;border:1px solid #707070"></div>
<div class="t" style="left:1141px;top:849.30px;font-size:15px;line-height:15px;color:#000;transform:scaleX(0.9667);transform-origin:0 0;">-</div>
<div class="b" style="left:1535px;top:846px;width:53px;height:27px;background:#E1E1E1;border:1px solid #777;box-shadow:inset 0 0 0 1px #EAEAEA"></div>
<div class="t" style="left:1361.5px;width:400px;text-align:center;top:852.80px;font-size:15px;line-height:15px;color:#000;transform:scaleX(0.9667);transform-origin:50% 0;">Save</div>
<div class="b" style="left:0px;top:882px;width:1598px;height:18px;background:#fff;border-bottom:1px solid #A0A0A0"></div>
<div class="b" style="left:0px;top:880px;width:467px;height:2px;background:#A8A8A8"></div>
<div class="b" style="left:467px;top:881px;width:1131px;height:1px;background:#A8A8A8"></div>
<div class="b" style="left:465px;top:882px;width:1px;height:17px;background:#E0E0E0"></div>
<div class="b" style="left:1085px;top:882px;width:1px;height:17px;background:#E0E0E0"></div>
<div class="t" style="left:2px;top:883.80px;font-size:15px;line-height:15px;color:#000;transform:scaleX(0.9667);transform-origin:0 0;">Files: 44</div>
</body></html>
